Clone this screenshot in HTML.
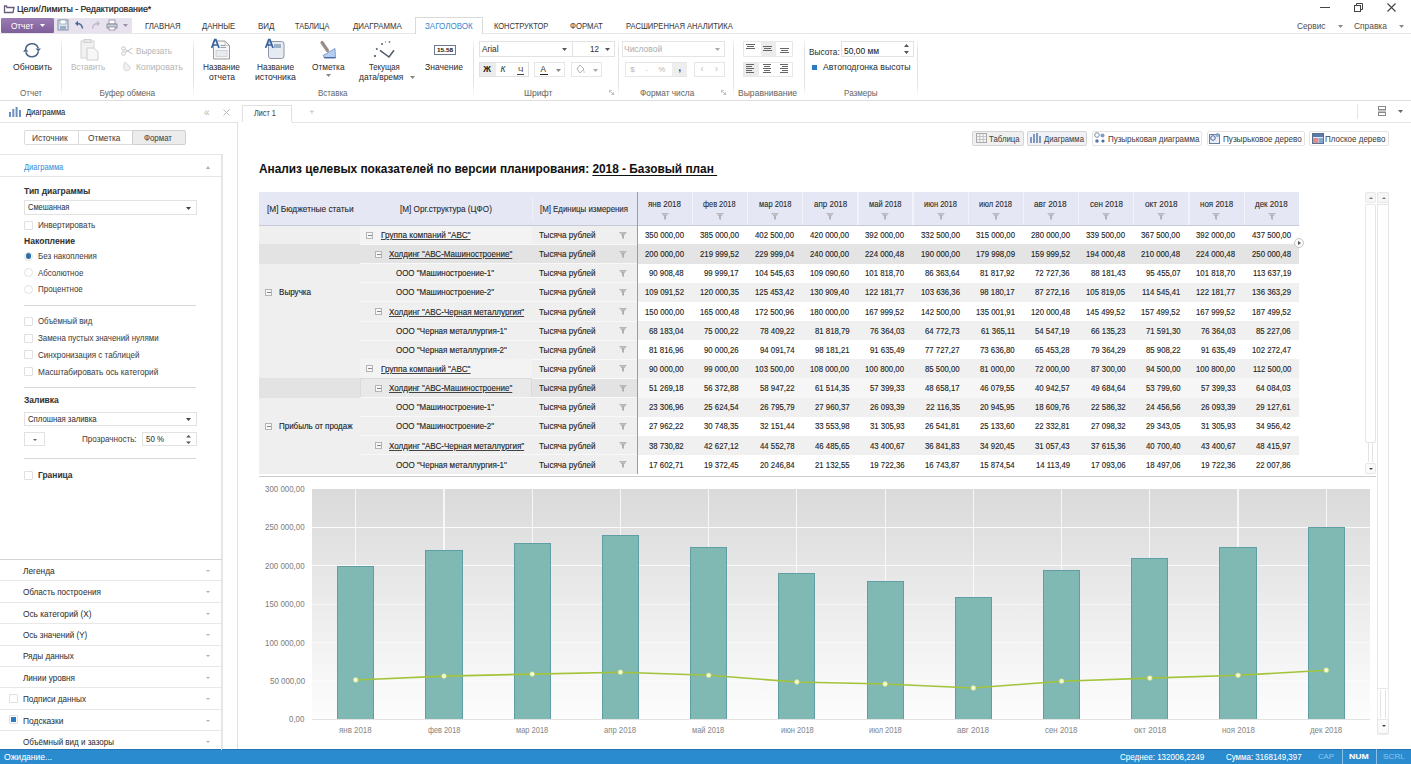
<!DOCTYPE html><html><head><meta charset="utf-8"><style>
*{margin:0;padding:0;box-sizing:border-box}
html,body{width:1411px;height:764px;overflow:hidden;background:#fff;font-family:"Liberation Sans",sans-serif}
.t{position:absolute;white-space:nowrap;line-height:1;transform-origin:0 0;-webkit-text-stroke:0.05px currentColor}
.r{position:absolute}
svg{position:absolute;overflow:visible}
</style></head><body>
<svg style="left:3px;top:3px" width="12" height="11" viewBox="0 0 12 11"><path d="M1.5 3.5 L1.5 9.5 L10 9.5 L11 4.5 L4 4.5 L3.5 3 L1.5 3 Z" fill="none" stroke="#6a5a7a" stroke-width="1.3"/></svg>
<div class="t" style="left:17.00px;top:5px;font-size:8.6px;color:#1a1a1a;transform:scaleX(1.0267);-webkit-text-stroke:0.2px currentColor;">Цели/Лимиты - Редактирование*</div>
<div class="r" style="left:1320px;top:7px;width:10px;height:1px;background:#444;"></div>
<svg style="left:1354px;top:3px" width="9" height="9" viewBox="0 0 9 9"><rect x="0.5" y="2.5" width="6" height="6" fill="none" stroke="#444"/><path d="M2.5 2.5 V0.5 H8.5 V6.5 H6.5" fill="none" stroke="#444"/></svg>
<svg style="left:1387px;top:3px" width="9" height="9" viewBox="0 0 9 9"><path d="M0.5 0.5 L8.5 8.5 M8.5 0.5 L0.5 8.5" stroke="#444" stroke-width="1.1"/></svg>
<div class="r" style="left:1px;top:18px;width:53px;height:15px;background:linear-gradient(#9a7bb3,#7e5f9a);border-radius:1px;"></div>
<div class="t" style="left:11.00px;top:23px;font-size:8.2px;color:#fff;">Отчет</div>
<svg style="left:40px;top:24px" width="5" height="3"><path d="M0 0 H5 L2.5 3Z" fill="#fff"/></svg>
<div class="r" style="left:54px;top:18px;width:78px;height:15px;background:#e8e2ef;"></div>
<svg style="left:57px;top:19px" width="12" height="12" viewBox="0 0 12 12"><rect x="1" y="1" width="10" height="10" fill="#dfe6f0" stroke="#7d8fa8"/><rect x="3" y="1" width="6" height="4" fill="#fff" stroke="#7d8fa8" stroke-width=".6"/><rect x="3" y="7" width="6" height="4" fill="#9bb0c8"/></svg>
<svg style="left:74px;top:20px" width="10" height="10" viewBox="0 0 10 10"><path d="M8.5 8.5 Q8 3.5 3 3.5" fill="none" stroke="#4a6a95" stroke-width="1.5"/><path d="M1 3.5 L4 0.8 L4 6.2Z" fill="#4a6a95"/></svg>
<svg style="left:91px;top:20px" width="10" height="10" viewBox="0 0 10 10"><path d="M1.5 8.5 Q2 3.5 7 3.5" fill="none" stroke="#c0b8c8" stroke-width="1.5"/><path d="M9 3.5 L6 0.8 L6 6.2Z" fill="#c0b8c8"/></svg>
<svg style="left:106px;top:19px" width="12" height="12" viewBox="0 0 12 12"><rect x="3" y="1" width="6" height="4" fill="#fff" stroke="#8a8a9a" stroke-width=".8"/><rect x="1" y="5" width="10" height="4" fill="#c8ccd8" stroke="#7a7f90" stroke-width=".8"/><rect x="3" y="8" width="6" height="3" fill="#fff" stroke="#8a8a9a" stroke-width=".8"/></svg>
<svg style="left:123px;top:24px" width="5" height="3"><path d="M0 0 H5 L2.5 3Z" fill="#9a92a8"/></svg>
<div class="r" style="left:0px;top:32.5px;width:1411px;height:1.8px;background:#e8e8e8;"></div>
<div class="r" style="left:415px;top:17px;width:68px;height:17px;background:#fff;border:1px solid #dadada;border-bottom:none;"></div>
<div class="t" style="left:145.00px;top:23px;font-size:8.2px;color:#3a3a3a;transform:scaleX(0.9459);">ГЛАВНАЯ</div>
<div class="t" style="left:202.00px;top:23px;font-size:8.2px;color:#3a3a3a;transform:scaleX(0.9306);">ДАННЫЕ</div>
<div class="t" style="left:257.50px;top:23px;font-size:8.2px;color:#3a3a3a;transform:scaleX(0.9706);">ВИД</div>
<div class="t" style="left:295.30px;top:23px;font-size:8.2px;color:#3a3a3a;transform:scaleX(0.8974);">ТАБЛИЦА</div>
<div class="t" style="left:353.00px;top:23px;font-size:8.2px;color:#3a3a3a;transform:scaleX(0.9608);">ДИАГРАММА</div>
<div class="t" style="left:424.70px;top:23px;font-size:8.2px;color:#3d8fd8;transform:scaleX(0.9796);">ЗАГОЛОВОК</div>
<div class="t" style="left:494.40px;top:23px;font-size:8.2px;color:#3a3a3a;transform:scaleX(0.9153);">КОНСТРУКТОР</div>
<div class="t" style="left:569.60px;top:23px;font-size:8.2px;color:#3a3a3a;transform:scaleX(0.9486);">ФОРМАТ</div>
<div class="t" style="left:626.30px;top:23px;font-size:8.2px;color:#3a3a3a;transform:scaleX(0.9259);">РАСШИРЕННАЯ АНАЛИТИКА</div>
<div class="t" style="left:1297.30px;top:23px;font-size:8.2px;color:#555;transform:scaleX(1.0143);">Сервис</div>
<div class="t" style="left:1354.00px;top:23px;font-size:8.2px;color:#555;transform:scaleX(1.0219);">Справка</div>
<svg style="left:1338px;top:25px" width="5" height="3"><path d="M0 0 H5 L2.5 3Z" fill="#888"/></svg>
<svg style="left:1399px;top:25px" width="5" height="3"><path d="M0 0 H5 L2.5 3Z" fill="#888"/></svg>
<div class="r" style="left:0px;top:100px;width:1411px;height:1px;background:#dedede;"></div>
<div class="r" style="left:60.5px;top:38px;width:1px;height:58px;background:linear-gradient(rgba(230,230,230,0),#e2e2e2 20%,#e2e2e2 80%,rgba(230,230,230,0));"></div>
<div class="r" style="left:193px;top:38px;width:1px;height:58px;background:linear-gradient(rgba(230,230,230,0),#e2e2e2 20%,#e2e2e2 80%,rgba(230,230,230,0));"></div>
<div class="r" style="left:473px;top:38px;width:1px;height:58px;background:linear-gradient(rgba(230,230,230,0),#e2e2e2 20%,#e2e2e2 80%,rgba(230,230,230,0));"></div>
<div class="r" style="left:618px;top:38px;width:1px;height:58px;background:linear-gradient(rgba(230,230,230,0),#e2e2e2 20%,#e2e2e2 80%,rgba(230,230,230,0));"></div>
<div class="r" style="left:733px;top:38px;width:1px;height:58px;background:linear-gradient(rgba(230,230,230,0),#e2e2e2 20%,#e2e2e2 80%,rgba(230,230,230,0));"></div>
<div class="r" style="left:803.7px;top:38px;width:1px;height:58px;background:linear-gradient(rgba(230,230,230,0),#e2e2e2 20%,#e2e2e2 80%,rgba(230,230,230,0));"></div>
<div class="r" style="left:916.6px;top:38px;width:1px;height:58px;background:linear-gradient(rgba(230,230,230,0),#e2e2e2 20%,#e2e2e2 80%,rgba(230,230,230,0));"></div>
<div class="t" style="left:20.40px;top:90px;font-size:8.2px;color:#6a6a6a;transform:scaleX(0.9826);">Отчет</div>
<div class="t" style="left:99.50px;top:90px;font-size:8.2px;color:#6a6a6a;">Буфер обмена</div>
<div class="t" style="left:318.00px;top:90px;font-size:8.2px;color:#6a6a6a;transform:scaleX(0.9677);">Вставка</div>
<div class="t" style="left:524.40px;top:90px;font-size:8.2px;color:#6a6a6a;transform:scaleX(1.0593);">Шрифт</div>
<div class="t" style="left:640.00px;top:90px;font-size:8.2px;color:#6a6a6a;transform:scaleX(1.0130);">Формат числа</div>
<div class="t" style="left:737.50px;top:90px;font-size:8.2px;color:#6a6a6a;transform:scaleX(1.0464);">Выравнивание</div>
<div class="t" style="left:844.00px;top:90px;font-size:8.2px;color:#6a6a6a;transform:scaleX(0.9882);">Размеры</div>
<svg style="left:608.5px;top:90px" width="5" height="5" viewBox="0 0 5 5"><path d="M0.5 0.5 H2.5 M0.5 0.5 V2.5 M1.5 1.5 L4.5 4.5 M4.5 2.5 V4.5 H2.5" stroke="#aaa" stroke-width=".8" fill="none"/></svg>
<svg style="left:720.5px;top:90px" width="5" height="5" viewBox="0 0 5 5"><path d="M0.5 0.5 H2.5 M0.5 0.5 V2.5 M1.5 1.5 L4.5 4.5 M4.5 2.5 V4.5 H2.5" stroke="#aaa" stroke-width=".8" fill="none"/></svg>
<svg style="left:23.3px;top:40.7px" width="18" height="18" viewBox="0 0 18 18"><path d="M2.6 8.2 A6.5 6.5 0 0 1 15.2 7.2" fill="none" stroke="#4d6585" stroke-width="1.6"/><path d="M15.4 10.4 A6.5 6.5 0 0 1 2.8 11.2" fill="none" stroke="#4d6585" stroke-width="1.6"/><path d="M12.6 7.4 H18 L15.3 10.6Z" fill="#4d6585"/><path d="M0 10.8 H5.4 L2.7 7.6Z" fill="#4d6585"/></svg>
<div class="t" style="left:12.80px;top:64px;font-size:8.2px;color:#333;transform:scaleX(1.0541);">Обновить</div>
<svg style="left:80px;top:39px" width="19" height="22" viewBox="0 0 19 22"><rect x="1" y="2" width="13" height="17" fill="#f1f1f1" stroke="#d4d4d4"/><rect x="4" y="0.5" width="7" height="3" fill="#e8e8e8" stroke="#d0d0d0"/><path d="M7 9 H14 L18 13 V21 H7Z" fill="#f7f7f7" stroke="#cfcfcf"/></svg>
<div class="t" style="left:71.40px;top:64px;font-size:8.2px;color:#b8b8b8;transform:scaleX(0.9829);">Вставить</div>
<svg style="left:121px;top:46px" width="12" height="10" viewBox="0 0 12 10"><circle cx="2.5" cy="2.5" r="1.8" fill="none" stroke="#c4c4c4"/><circle cx="2.5" cy="7.5" r="1.8" fill="none" stroke="#c4c4c4"/><path d="M4 3.5 L11.5 8 M4 6.5 L11.5 2" stroke="#c4c4c4"/></svg>
<div class="t" style="left:136.00px;top:48px;font-size:8.2px;color:#b8b8b8;transform:scaleX(0.9892);">Вырезать</div>
<svg style="left:122px;top:61px" width="10" height="11" viewBox="0 0 10 11"><path d="M2 5 Q1 1 4 1.5 L6 4 Q9 5 8 8 Q6 10.5 3 9.5 Q1 8 2 5Z" fill="#f0f0f0" stroke="#d8d8d8"/></svg>
<div class="t" style="left:136.00px;top:64px;font-size:8.2px;color:#b8b8b8;transform:scaleX(1.0636);">Копировать</div>
<svg style="left:211px;top:39px" width="21" height="21" viewBox="0 0 21 21"><path d="M2.5 2 H14 L18.5 6.5 V20 H2.5Z" fill="#f6f6f6" stroke="#9a9a9a"/><path d="M14 2 V6.5 H18.5" fill="none" stroke="#b0b0b0" stroke-width=".7"/><rect x="5" y="11.5" width="11" height="6" fill="#e8ebef" stroke="#c4c8cf" stroke-width=".7"/><path d="M9.5 6.5 H14 M9.5 8.5 H15" stroke="#7a8aa0" stroke-width=".8"/><path d="M0.6 9 L3.7 0.6 H4.9 L8 9 M1.8 6 H6.8" stroke="#3a64a0" stroke-width="1.7" fill="none"/></svg>
<div class="t" style="left:202.60px;top:64px;font-size:8.2px;color:#333;transform:scaleX(1.0081);">Название</div>
<div class="t" style="left:208.90px;top:74px;font-size:8.2px;color:#333;transform:scaleX(1.0440);">отчета</div>
<svg style="left:265px;top:39px" width="21" height="21" viewBox="0 0 21 21"><rect x="3.5" y="2.5" width="15.5" height="17" rx="2.5" fill="#e6ebf3" stroke="#8c96a6"/><rect x="9" y="5" width="7" height="4" fill="#9fb0c8"/><path d="M0.6 9 L3.7 0.6 H4.9 L8 9 M1.8 6 H6.8" stroke="#3a64a0" stroke-width="1.7" fill="none"/></svg>
<div class="t" style="left:257.00px;top:64px;font-size:8.2px;color:#333;transform:scaleX(1.0108);">Название</div>
<div class="t" style="left:255.20px;top:74px;font-size:8.2px;color:#333;transform:scaleX(1.0641);">источника</div>
<svg style="left:315px;top:36px" width="30" height="26" viewBox="315 36 30 26"><path d="M322 42.5 L327.5 50.5" stroke="#9c8c88" stroke-width="3.2" stroke-linecap="round"/><path d="M323 55.5 L335 48.5 L335.5 58 L324.5 58Z" fill="#b4cdf0" stroke="#6d8fc4" stroke-width=".8"/><path d="M324 57.6 H335.5" stroke="#4a6a9e" stroke-width="1.2"/></svg>
<div class="t" style="left:311.60px;top:64px;font-size:8.2px;color:#333;transform:scaleX(1.0125);">Отметка</div>
<svg style="left:326px;top:74px" width="5" height="3"><path d="M0 0 H5 L2.5 3Z" fill="#888"/></svg>
<svg style="left:370px;top:36px" width="30" height="26" viewBox="370 36 30 26"><circle cx="375" cy="56" r="1.1" fill="#4a5260"/><circle cx="376.8" cy="49" r="1" fill="#5a626e"/><circle cx="382" cy="44" r="1" fill="#5a626e"/><circle cx="385.5" cy="42" r=".8" fill="#9aa0a8"/><circle cx="389.5" cy="42" r=".9" fill="#7a808a"/><path d="M380 50.3 L389 57 L394 50.3" fill="none" stroke="#505a68" stroke-width="1.5"/></svg>
<div class="t" style="left:369.00px;top:64px;font-size:8.2px;color:#333;transform:scaleX(0.9455);">Текущая</div>
<div class="t" style="left:359.10px;top:74px;font-size:8.2px;color:#333;transform:scaleX(1.0279);">дата/время</div>
<svg style="left:410px;top:76px" width="5" height="3"><path d="M0 0 H5 L2.5 3Z" fill="#888"/></svg>
<div class="r" style="left:433.5px;top:44.8px;width:22px;height:10.2px;border:1px solid #6a7a90;background:#fff;"></div>
<div class="t" style="left:436.50px;top:47px;font-size:6px;color:#222;font-weight:bold;transform:scaleX(1.0667);">15.58</div>
<div class="t" style="left:425.40px;top:64px;font-size:8.2px;color:#333;transform:scaleX(1.0444);">Значение</div>
<div class="r" style="left:478.5px;top:41.3px;width:136px;height:15.3px;border:1px solid #e2e2e2;background:#fff;"></div>
<div class="r" style="left:572.2px;top:41.3px;width:1px;height:15.3px;background:#e2e2e2;"></div>
<div class="t" style="left:481.50px;top:46px;font-size:8.2px;color:#333;transform:scaleX(1.0063);">Arial</div>
<div class="t" style="left:590.20px;top:46px;font-size:8.2px;color:#333;transform:scaleX(0.9778);">12</div>
<svg style="left:561.5px;top:48px" width="5" height="3"><path d="M0 0 H5 L2.5 3Z" fill="#555"/></svg>
<svg style="left:604.5px;top:48px" width="5" height="3"><path d="M0 0 H5 L2.5 3Z" fill="#555"/></svg>
<div class="r" style="left:478.5px;top:62px;width:50.5px;height:14.5px;border:1px solid #e0e0e0;background:#fff;"></div>
<div class="r" style="left:479.5px;top:63px;width:16px;height:12.5px;background:#ececec;"></div>
<div class="t" style="left:483.30px;top:65px;font-size:8.5px;color:#222;font-weight:bold;">Ж</div>
<div class="t" style="left:500.50px;top:65px;font-size:8.5px;color:#333;font-style:italic;">К</div>
<div class="t" style="left:518.00px;top:66px;font-size:8px;color:#444;">Ч</div>
<div class="r" style="left:517px;top:74px;width:7px;height:0.8px;background:#444;"></div>
<div class="r" style="left:534px;top:62px;width:31.3px;height:14.5px;border:1px solid #e6e6e6;background:#fff;"></div>
<div class="t" style="left:540.50px;top:66px;font-size:8.2px;color:#333;">А</div>
<div class="r" style="left:539.5px;top:73.5px;width:8px;height:1.5px;background:#222;"></div>
<svg style="left:555.5px;top:69px" width="5" height="3"><path d="M0 0 H5 L2.5 3Z" fill="#888"/></svg>
<div class="r" style="left:571px;top:62px;width:30.7px;height:14.5px;border:1px solid #e6e6e6;background:#fff;"></div>
<svg style="left:575px;top:64px" width="11" height="10" viewBox="0 0 11 10"><path d="M2 5 L5 1 L9 5 L5 9Z" fill="none" stroke="#b0b0b0"/><path d="M8 6 Q10 8 9 9" stroke="#c8c8c8" fill="none"/></svg>
<svg style="left:592.5px;top:69px" width="5" height="3"><path d="M0 0 H5 L2.5 3Z" fill="#aaa"/></svg>
<div class="r" style="left:622px;top:41.3px;width:102.5px;height:15.3px;border:1px solid #e4e4e4;background:#fff;"></div>
<div class="t" style="left:623.90px;top:46px;font-size:8.2px;color:#b0b0b0;transform:scaleX(1.0324);">Числовой</div>
<svg style="left:714.5px;top:48px" width="5" height="3"><path d="M0 0 H5 L2.5 3Z" fill="#aaa"/></svg>
<div class="r" style="left:625px;top:62px;width:62px;height:14.5px;border:1px solid #e6e6e6;background:#fff;"></div>
<div class="r" style="left:671.5px;top:63px;width:15px;height:12.5px;background:#eeeeee;"></div>
<div class="t" style="left:630.20px;top:66px;font-size:8px;color:#bbb;">$</div>
<div class="t" style="left:645.30px;top:66px;font-size:8px;color:#ccc;">-</div>
<div class="t" style="left:658.50px;top:66px;font-size:7.5px;color:#bbb;">%</div>
<div class="t" style="left:678.40px;top:64px;font-size:9px;color:#333;font-weight:bold;">,</div>
<div class="r" style="left:693.5px;top:62px;width:31.8px;height:14.5px;border:1px solid #e6e6e6;background:#fff;"></div>
<div class="t" style="left:700.50px;top:65px;font-size:9px;color:#bbb;">‹</div>
<div class="t" style="left:715.00px;top:65px;font-size:9px;color:#bbb;">›</div>
<div class="r" style="left:743.3px;top:41.3px;width:49.7px;height:15.3px;border:1px solid #e8e8e8;"></div>
<div class="r" style="left:760.5px;top:42.3px;width:15px;height:13.3px;background:#ececec;"></div>
<div class="r" style="left:743.3px;top:62px;width:49.7px;height:14.5px;border:1px solid #e8e8e8;"></div>
<div class="r" style="left:744.3px;top:63px;width:15px;height:12.5px;background:#ececec;"></div>
<div class="r" style="left:746px;top:44px;width:9px;height:1.4px;background:#666"></div><div class="r" style="left:747px;top:46px;width:7px;height:1.4px;background:#666"></div><div class="r" style="left:746px;top:48px;width:9px;height:1.4px;background:#666"></div>
<div class="r" style="left:763px;top:46px;width:9px;height:1.4px;background:#666"></div><div class="r" style="left:764px;top:48px;width:7px;height:1.4px;background:#666"></div><div class="r" style="left:763px;top:50px;width:9px;height:1.4px;background:#666"></div>
<div class="r" style="left:780px;top:48px;width:9px;height:1.4px;background:#666"></div><div class="r" style="left:781px;top:50px;width:7px;height:1.4px;background:#666"></div><div class="r" style="left:780px;top:52px;width:9px;height:1.4px;background:#666"></div>
<div class="r" style="left:746px;top:64px;width:8px;height:1.4px;background:#666"></div><div class="r" style="left:746px;top:66px;width:6px;height:1.4px;background:#666"></div><div class="r" style="left:746px;top:68px;width:8px;height:1.4px;background:#666"></div><div class="r" style="left:746px;top:70px;width:6px;height:1.4px;background:#666"></div><div class="r" style="left:746px;top:72px;width:8px;height:1.4px;background:#666"></div>
<div class="r" style="left:763px;top:64px;width:8px;height:1.4px;background:#666"></div><div class="r" style="left:764px;top:66px;width:6px;height:1.4px;background:#666"></div><div class="r" style="left:763px;top:68px;width:8px;height:1.4px;background:#666"></div><div class="r" style="left:764px;top:70px;width:6px;height:1.4px;background:#666"></div><div class="r" style="left:763px;top:72px;width:8px;height:1.4px;background:#666"></div>
<div class="r" style="left:780px;top:64px;width:8px;height:1.4px;background:#666"></div><div class="r" style="left:782px;top:66px;width:6px;height:1.4px;background:#666"></div><div class="r" style="left:780px;top:68px;width:8px;height:1.4px;background:#666"></div><div class="r" style="left:782px;top:70px;width:6px;height:1.4px;background:#666"></div><div class="r" style="left:780px;top:72px;width:8px;height:1.4px;background:#666"></div>
<div class="t" style="left:808.70px;top:49px;font-size:8.2px;color:#333;transform:scaleX(1.0100);">Высота:</div>
<div class="r" style="left:841.3px;top:41.3px;width:72.3px;height:15.7px;border:1px solid #e2e2e2;background:#fff;"></div>
<div class="t" style="left:844.00px;top:48px;font-size:8.2px;color:#222;transform:scaleX(1.0294);">50,00 мм</div>
<svg style="left:903.5px;top:44px" width="5" height="10"><path d="M0 3 L2.5 0 L5 3Z M0 7 H5 L2.5 10Z" fill="#555"/></svg>
<div class="r" style="left:811.5px;top:64.5px;width:5.5px;height:5.5px;background:#2b7bc4;"></div>
<div class="t" style="left:822.90px;top:64px;font-size:8.2px;color:#333;transform:scaleX(1.0634);">Автоподгонка высоты</div>
<div class="r" style="left:0px;top:122px;width:238px;height:1px;background:#e4e4e4;"></div>
<div class="r" style="left:292px;top:122px;width:1119px;height:1px;background:#e4e4e4;"></div>
<div class="r" style="left:238px;top:121.5px;width:54px;height:1px;background:#fff;"></div>
<svg style="left:9px;top:107px" width="12" height="10" viewBox="0 0 12 10"><rect x="0" y="5" width="2" height="5" fill="#6d8fbf"/><rect x="3.3" y="2" width="2" height="8" fill="#6d8fbf"/><rect x="6.6" y="0" width="2" height="10" fill="#6d8fbf"/><rect x="10" y="3" width="2" height="7" fill="#6d8fbf"/></svg>
<div class="t" style="left:25.60px;top:109px;font-size:8.2px;color:#222;transform:scaleX(0.9233);">Диаграмма</div>
<div class="t" style="left:204.00px;top:108px;font-size:10px;color:#bbb;">«</div>
<svg style="left:222.5px;top:108.5px" width="7" height="7"><path d="M0.5 0.5 L6.5 6.5 M6.5 0.5 L0.5 6.5" stroke="#bbb" stroke-width="1"/></svg>
<div class="r" style="left:241.5px;top:105.4px;width:50px;height:17px;border:1px solid #e0e0e0;border-bottom:none;background:#fff;"></div>
<div class="t" style="left:254.40px;top:110px;font-size:8.2px;color:#444;transform:scaleX(0.8880);">Лист 1</div>
<div class="t" style="left:309.30px;top:108px;font-size:9px;color:#bbb;">+</div>
<div class="r" style="left:1356.5px;top:104px;width:1px;height:15px;background:#e4e4e4;"></div>
<svg style="left:1378px;top:106px" width="8" height="10" viewBox="0 0 8 10"><rect x=".5" y=".5" width="7" height="3" fill="none" stroke="#888"/><rect x=".5" y="6.5" width="7" height="3" fill="none" stroke="#888"/><path d="M0 5 H8" stroke="#888"/></svg>
<svg style="left:1397.5px;top:110px" width="5" height="3"><path d="M0 0 H5 L2.5 3Z" fill="#666"/></svg>
<div class="r" style="left:0px;top:749px;width:1411px;height:15px;background:#2a8ccf;border-top:1px solid #2274b4;"></div>
<div class="t" style="left:4.00px;top:754px;font-size:8.2px;color:#fff;transform:scaleX(1.0435);">Ожидание...</div>
<div class="r" style="left:237px;top:123px;width:1px;height:626px;background:#e2e2e2;"></div>
<div class="r" style="left:24px;top:130.4px;width:162.4px;height:14.7px;border:1px solid #dcdcdc;border-radius:2px;background:#fff;"></div>
<div class="r" style="left:132px;top:130.4px;width:54.4px;height:14.7px;border:1px solid #cfcfcf;border-radius:2px;background:#ececec;"></div>
<div class="r" style="left:77.8px;top:131px;width:1px;height:13.5px;background:#dcdcdc;"></div>
<div class="t" style="left:32.40px;top:135px;font-size:8.2px;color:#444;transform:scaleX(1.0171);">Источник</div>
<div class="t" style="left:88.40px;top:135px;font-size:8.2px;color:#444;transform:scaleX(1.0063);">Отметка</div>
<div class="t" style="left:144.40px;top:135px;font-size:8.2px;color:#444;transform:scaleX(0.9621);">Формат</div>
<div class="r" style="left:-1px;top:154.2px;width:223.2px;height:596px;border:1px solid #e6e6e6;border-bottom:none;"></div>
<div class="r" style="left:0px;top:176px;width:222px;height:1px;background:#e6e6e6;"></div>
<div class="t" style="left:23.80px;top:164px;font-size:8.2px;color:#3d8fd8;transform:scaleX(0.9233);">Диаграмма</div>
<svg style="left:205.5px;top:165.5px" width="4" height="3"><path d="M0 3 L2 0 L4 3Z" fill="#aaa"/></svg>
<div class="t" style="left:23.60px;top:188px;font-size:8.2px;color:#333;font-weight:bold;transform:scaleX(1.0406);">Тип диаграммы</div>
<div class="r" style="left:23.6px;top:200.3px;width:173.2px;height:15px;border:1px solid #e2e2e2;background:#fff;"></div>
<div class="t" style="left:28.00px;top:204px;font-size:8.2px;color:#333;transform:scaleX(0.9156);">Смешанная</div>
<svg style="left:186px;top:206.5px" width="5" height="3"><path d="M0 0 H5 L2.5 3Z" fill="#444"/></svg>
<div class="r" style="left:24px;top:220.9px;width:9px;height:9px;border:1px solid #e0e0e0;background:#fff;border-radius:1px"></div>
<div class="t" style="left:38.00px;top:222px;font-size:8.2px;color:#444;transform:scaleX(0.9948);">Инвертировать</div>
<div class="t" style="left:23.60px;top:238px;font-size:8.2px;color:#333;font-weight:bold;transform:scaleX(1.0490);">Накопление</div>
<div class="r" style="left:24px;top:251.5px;width:9px;height:9px;border:1px solid #e2e2e2;border-radius:50%;background:#fff"></div>
<div class="r" style="left:25.7px;top:253.2px;width:5.6px;height:5.6px;border-radius:50%;background:#2f6ea8"></div>
<div class="t" style="left:38.00px;top:253px;font-size:8.2px;color:#444;transform:scaleX(0.9750);">Без накопления</div>
<div class="r" style="left:24px;top:268.4px;width:9px;height:9px;border:1px solid #e2e2e2;border-radius:50%;background:#fff"></div>
<div class="t" style="left:38.00px;top:270px;font-size:8.2px;color:#444;transform:scaleX(0.9702);">Абсолютное</div>
<div class="r" style="left:24px;top:284.8px;width:9px;height:9px;border:1px solid #e2e2e2;border-radius:50%;background:#fff"></div>
<div class="t" style="left:38.00px;top:286px;font-size:8.2px;color:#444;transform:scaleX(0.9717);">Процентное</div>
<div class="r" style="left:24px;top:305px;width:172px;height:1px;background:#d8d8d8;"></div>
<div class="r" style="left:24px;top:316.5px;width:9px;height:9px;border:1px solid #e0e0e0;background:#fff;border-radius:1px"></div>
<div class="t" style="left:38.00px;top:318px;font-size:8.2px;color:#444;transform:scaleX(0.9509);">Объёмный вид</div>
<div class="r" style="left:24px;top:333.5px;width:9px;height:9px;border:1px solid #e0e0e0;background:#fff;border-radius:1px"></div>
<div class="t" style="left:38.00px;top:335px;font-size:8.2px;color:#444;transform:scaleX(0.9664);">Замена пустых значений нулями</div>
<div class="r" style="left:24px;top:350.3px;width:9px;height:9px;border:1px solid #e0e0e0;background:#fff;border-radius:1px"></div>
<div class="t" style="left:38.00px;top:352px;font-size:8.2px;color:#444;transform:scaleX(0.9796);">Синхронизация с таблицей</div>
<div class="r" style="left:24px;top:367.3px;width:9px;height:9px;border:1px solid #e0e0e0;background:#fff;border-radius:1px"></div>
<div class="t" style="left:38.00px;top:369px;font-size:8.2px;color:#444;">Масштабировать ось категорий</div>
<div class="r" style="left:24px;top:387px;width:172px;height:1px;background:#d8d8d8;"></div>
<div class="t" style="left:23.60px;top:397px;font-size:8.2px;color:#333;font-weight:bold;transform:scaleX(1.0353);">Заливка</div>
<div class="r" style="left:23.6px;top:412.4px;width:173.2px;height:14px;border:1px solid #e2e2e2;background:#fff;"></div>
<div class="t" style="left:28.00px;top:416px;font-size:8.2px;color:#333;transform:scaleX(0.9466);">Сплошная заливка</div>
<svg style="left:186px;top:418px" width="5" height="3"><path d="M0 0 H5 L2.5 3Z" fill="#444"/></svg>
<div class="r" style="left:24px;top:432px;width:21.2px;height:14.4px;border:1px solid #e2e2e2;background:#fff;"></div>
<svg style="left:32.5px;top:438.5px" width="4" height="2"><path d="M0 0 H4 L2 2Z" fill="#666"/></svg>
<div class="t" style="left:82.00px;top:436px;font-size:8.2px;color:#444;transform:scaleX(0.9873);">Прозрачность:</div>
<div class="r" style="left:142px;top:432px;width:54.8px;height:14.4px;border:1px solid #e2e2e2;background:#fff;"></div>
<div class="t" style="left:146.40px;top:436px;font-size:8.2px;color:#333;transform:scaleX(0.9684);">50 %</div>
<svg style="left:186px;top:434.5px" width="5" height="9"><path d="M0 2.5 L2.5 0 L5 2.5Z M0 6.5 H5 L2.5 9Z" fill="#555"/></svg>
<div class="r" style="left:24px;top:458px;width:172px;height:1px;background:#d8d8d8;"></div>
<div class="r" style="left:24px;top:470.5px;width:9px;height:9px;border:1px solid #e0e0e0;background:#fff;border-radius:1px"></div>
<div class="t" style="left:38.00px;top:472px;font-size:8.2px;color:#333;font-weight:bold;transform:scaleX(1.0294);">Граница</div>
<div class="r" style="left:0px;top:559px;width:222px;height:1px;background:#d4d4d4;"></div>
<div class="t" style="left:22.90px;top:568px;font-size:8.2px;color:#333;transform:scaleX(1.0194);">Легенда</div>
<svg style="left:205.5px;top:569.8px" width="4" height="2"><path d="M0 0 H4 L2 2Z" fill="#b0b0b0"/></svg>
<div class="r" style="left:0px;top:580.4px;width:222px;height:1px;background:#e8e8e8;"></div>
<div class="t" style="left:22.90px;top:589px;font-size:8.2px;color:#333;transform:scaleX(0.9923);">Область построения</div>
<svg style="left:205.5px;top:591.1899999999999px" width="4" height="2"><path d="M0 0 H4 L2 2Z" fill="#b0b0b0"/></svg>
<div class="r" style="left:0px;top:601.79px;width:222px;height:1px;background:#e8e8e8;"></div>
<div class="t" style="left:22.90px;top:611px;font-size:8.2px;color:#333;transform:scaleX(1.0149);">Ось категорий (X)</div>
<svg style="left:205.5px;top:612.5799999999999px" width="4" height="2"><path d="M0 0 H4 L2 2Z" fill="#b0b0b0"/></svg>
<div class="r" style="left:0px;top:623.18px;width:222px;height:1px;background:#e8e8e8;"></div>
<div class="t" style="left:22.90px;top:632px;font-size:8.2px;color:#333;transform:scaleX(0.9831);">Ось значений (Y)</div>
<svg style="left:205.5px;top:633.9699999999999px" width="4" height="2"><path d="M0 0 H4 L2 2Z" fill="#b0b0b0"/></svg>
<div class="r" style="left:0px;top:644.5699999999999px;width:222px;height:1px;background:#e8e8e8;"></div>
<div class="t" style="left:22.90px;top:653px;font-size:8.2px;color:#333;">Ряды данных</div>
<svg style="left:205.5px;top:655.3599999999999px" width="4" height="2"><path d="M0 0 H4 L2 2Z" fill="#b0b0b0"/></svg>
<div class="r" style="left:0px;top:665.96px;width:222px;height:1px;background:#e8e8e8;"></div>
<div class="t" style="left:22.90px;top:675px;font-size:8.2px;color:#333;transform:scaleX(0.9923);">Линии уровня</div>
<svg style="left:205.5px;top:676.75px" width="4" height="2"><path d="M0 0 H4 L2 2Z" fill="#b0b0b0"/></svg>
<div class="r" style="left:0px;top:687.35px;width:222px;height:1px;background:#e8e8e8;"></div>
<div class="t" style="left:22.90px;top:696px;font-size:8.2px;color:#333;transform:scaleX(0.9952);">Подписи данных</div>
<svg style="left:205.5px;top:698.14px" width="4" height="2"><path d="M0 0 H4 L2 2Z" fill="#b0b0b0"/></svg>
<div class="r" style="left:0px;top:708.74px;width:222px;height:1px;background:#e8e8e8;"></div>
<div class="t" style="left:22.90px;top:718px;font-size:8.2px;color:#333;transform:scaleX(1.0282);">Подсказки</div>
<svg style="left:205.5px;top:719.53px" width="4" height="2"><path d="M0 0 H4 L2 2Z" fill="#b0b0b0"/></svg>
<div class="r" style="left:0px;top:730.13px;width:222px;height:1px;background:#e8e8e8;"></div>
<div class="t" style="left:22.90px;top:739px;font-size:8.2px;color:#333;transform:scaleX(0.9774);">Объёмный вид и зазоры</div>
<svg style="left:205.5px;top:740.92px" width="4" height="2"><path d="M0 0 H4 L2 2Z" fill="#b0b0b0"/></svg>
<div class="r" style="left:8.5px;top:693.9px;width:9px;height:9px;border:1px solid #e0e0e0;background:#fff;border-radius:1px"></div>
<div class="r" style="left:8.5px;top:715.0px;width:9px;height:9px;border:1px solid #e0e0e0;background:#fff;border-radius:1px"></div>
<div class="r" style="left:10.5px;top:717.0px;width:5px;height:5px;background:#2b7bc4"></div>
<div class="r" style="left:222px;top:154.2px;width:1px;height:595px;background:#e6e6e6;"></div>
<div class="r" style="left:972.1px;top:131.2px;width:51.799999999999955px;height:14.4px;border:1px solid #d4d4d4;border-radius:2px;background:#f0f0f0;"></div>
<div class="r" style="left:1027px;top:131.2px;width:60.200000000000045px;height:14.4px;border:1px solid #d4d4d4;border-radius:2px;background:#f0f2f7;"></div>
<div class="r" style="left:1091.6px;top:131.2px;width:110.60000000000014px;height:14.4px;border:1px solid #e4e4e4;border-radius:2px;background:#fff;"></div>
<div class="r" style="left:1206.6px;top:131.2px;width:98.40000000000009px;height:14.4px;border:1px solid #e4e4e4;border-radius:2px;background:#fff;"></div>
<div class="r" style="left:1309.2px;top:131.2px;width:79.79999999999995px;height:14.4px;border:1px solid #e4e4e4;border-radius:2px;background:#fff;"></div>
<svg style="left:976px;top:133px" width="11" height="10" viewBox="0 0 11 10"><rect x=".5" y=".5" width="10" height="9" fill="#f4f4f4" stroke="#a8a8a8"/><path d="M.5 3.5 H10.5 M.5 6.5 H10.5 M3.8 .5 V9.5 M7.2 .5 V9.5" stroke="#b4b4b4" stroke-width=".7"/></svg>
<div class="t" style="left:989.40px;top:136px;font-size:8.2px;color:#444;transform:scaleX(0.9563);">Таблица</div>
<svg style="left:1030px;top:133px" width="11" height="10" viewBox="0 0 11 10"><rect x="0" y="4" width="2" height="6" fill="#7f98bd"/><rect x="3" y="1" width="2" height="9" fill="#7f98bd"/><rect x="6" y="0" width="2" height="10" fill="#7f98bd"/><rect x="9" y="3" width="2" height="7" fill="#7f98bd"/></svg>
<div class="t" style="left:1043.70px;top:136px;font-size:8.2px;color:#444;transform:scaleX(0.9372);">Диаграмма</div>
<svg style="left:1094px;top:132px" width="12" height="12" viewBox="0 0 12 12"><circle cx="3" cy="3" r="2.3" fill="none" stroke="#7a8aa0"/><circle cx="8.5" cy="3.5" r="2" fill="#7a9cc8"/><circle cx="3" cy="9" r="1.8" fill="#5a7aaa"/><circle cx="9" cy="9" r="1.6" fill="#4a6a9a"/></svg>
<div class="t" style="left:1107.60px;top:136px;font-size:8.2px;color:#444;transform:scaleX(0.9723);">Пузырьковая диаграмма</div>
<svg style="left:1209px;top:132px" width="12" height="12" viewBox="0 0 12 12"><rect x=".5" y="2.5" width="10" height="9" fill="#e8eef6" stroke="#6a7f9f"/><circle cx="4" cy="6" r="2.3" fill="none" stroke="#4a6a9a"/><circle cx="8.5" cy="3" r="2" fill="#8aa8cc"/></svg>
<div class="t" style="left:1222.60px;top:136px;font-size:8.2px;color:#444;transform:scaleX(0.9912);">Пузырьковое дерево</div>
<svg style="left:1311.5px;top:132.5px" width="12" height="11" viewBox="0 0 12 11"><rect x=".5" y=".5" width="11" height="10" fill="#dfe7f2" stroke="#5a6f90"/><rect x="1" y="1" width="10" height="3" fill="#5a7aaa"/><rect x="1" y="5" width="5" height="5" fill="#e38a8a"/><rect x="6.5" y="5" width="4.5" height="5" fill="#8aa8cc"/></svg>
<div class="t" style="left:1325.20px;top:136px;font-size:8.2px;color:#444;transform:scaleX(0.9790);">Плоское дерево</div>
<div class="t" style="left:259.40px;top:162px;font-size:13px;color:#111;font-weight:bold;transform:scaleX(0.9117);">Анализ целевых показателей по версии планирования: <span style="text-decoration:underline;text-underline-offset:1.5px;text-decoration-thickness:1.3px">2018 - Базовый план&nbsp;</span></div>
<div class="r" style="left:259.2px;top:192px;width:1040.0px;height:33.19999999999999px;background:#e6e7f4;"></div>
<div class="r" style="left:691.6833333333334px;top:192px;width:1.3px;height:33.19999999999999px;background:#f2f3f9;"></div>
<div class="r" style="left:746.8666666666667px;top:192px;width:1.3px;height:33.19999999999999px;background:#f2f3f9;"></div>
<div class="r" style="left:802.05px;top:192px;width:1.3px;height:33.19999999999999px;background:#f2f3f9;"></div>
<div class="r" style="left:857.2333333333333px;top:192px;width:1.3px;height:33.19999999999999px;background:#f2f3f9;"></div>
<div class="r" style="left:912.4166666666667px;top:192px;width:1.3px;height:33.19999999999999px;background:#f2f3f9;"></div>
<div class="r" style="left:967.6px;top:192px;width:1.3px;height:33.19999999999999px;background:#f2f3f9;"></div>
<div class="r" style="left:1022.7833333333333px;top:192px;width:1.3px;height:33.19999999999999px;background:#f2f3f9;"></div>
<div class="r" style="left:1077.9666666666667px;top:192px;width:1.3px;height:33.19999999999999px;background:#f2f3f9;"></div>
<div class="r" style="left:1133.15px;top:192px;width:1.3px;height:33.19999999999999px;background:#f2f3f9;"></div>
<div class="r" style="left:1188.3333333333335px;top:192px;width:1.3px;height:33.19999999999999px;background:#f2f3f9;"></div>
<div class="r" style="left:1243.5166666666667px;top:192px;width:1.3px;height:33.19999999999999px;background:#f2f3f9;"></div>
<div class="t" style="left:267.20px;top:205px;font-size:8.5px;color:#2a2a2a;transform:scaleX(0.9784);-webkit-text-stroke:0.1px currentColor;">[М] Бюджетные статьи</div>
<div class="t" style="left:400.10px;top:205px;font-size:8.5px;color:#2a2a2a;transform:scaleX(0.9594);-webkit-text-stroke:0.1px currentColor;">[М] Орг.структура (ЦФО)</div>
<div class="t" style="left:540.00px;top:205px;font-size:8.5px;color:#2a2a2a;transform:scaleX(0.9263);-webkit-text-stroke:0.1px currentColor;">[М] Единицы измерения</div>
<div class="t" style="left:648.14px;top:200px;font-size:8.5px;color:#2a2a2a;transform:scaleX(0.9400);-webkit-text-stroke:0.1px currentColor;">янв 2018</div>
<svg style="left:660.5916666666667px;top:212.5px" width="8" height="7" viewBox="0 0 8 7"><path d="M0 0 H8 L5 3.5 V7 L3 6 V3.5Z" fill="#b4b4bc"/><path d="M0.5 1.2 H7.5" stroke="#fff" stroke-width=".5" opacity=".6"/></svg>
<div class="t" style="left:703.32px;top:200px;font-size:8.5px;color:#2a2a2a;transform:scaleX(0.8658);-webkit-text-stroke:0.1px currentColor;">фев 2018</div>
<svg style="left:715.775px;top:212.5px" width="8" height="7" viewBox="0 0 8 7"><path d="M0 0 H8 L5 3.5 V7 L3 6 V3.5Z" fill="#b4b4bc"/><path d="M0.5 1.2 H7.5" stroke="#fff" stroke-width=".5" opacity=".6"/></svg>
<div class="t" style="left:758.51px;top:200px;font-size:8.5px;color:#2a2a2a;transform:scaleX(0.8892);-webkit-text-stroke:0.1px currentColor;">мар 2018</div>
<svg style="left:770.9583333333334px;top:212.5px" width="8" height="7" viewBox="0 0 8 7"><path d="M0 0 H8 L5 3.5 V7 L3 6 V3.5Z" fill="#b4b4bc"/><path d="M0.5 1.2 H7.5" stroke="#fff" stroke-width=".5" opacity=".6"/></svg>
<div class="t" style="left:813.69px;top:200px;font-size:8.5px;color:#2a2a2a;transform:scaleX(0.9400);-webkit-text-stroke:0.1px currentColor;">апр 2018</div>
<svg style="left:826.1416666666667px;top:212.5px" width="8" height="7" viewBox="0 0 8 7"><path d="M0 0 H8 L5 3.5 V7 L3 6 V3.5Z" fill="#b4b4bc"/><path d="M0.5 1.2 H7.5" stroke="#fff" stroke-width=".5" opacity=".6"/></svg>
<div class="t" style="left:868.88px;top:200px;font-size:8.5px;color:#2a2a2a;transform:scaleX(0.8892);-webkit-text-stroke:0.1px currentColor;">май 2018</div>
<svg style="left:881.325px;top:212.5px" width="8" height="7" viewBox="0 0 8 7"><path d="M0 0 H8 L5 3.5 V7 L3 6 V3.5Z" fill="#b4b4bc"/><path d="M0.5 1.2 H7.5" stroke="#fff" stroke-width=".5" opacity=".6"/></svg>
<div class="t" style="left:924.06px;top:200px;font-size:8.5px;color:#2a2a2a;transform:scaleX(0.8892);-webkit-text-stroke:0.1px currentColor;">июн 2018</div>
<svg style="left:936.5083333333333px;top:212.5px" width="8" height="7" viewBox="0 0 8 7"><path d="M0 0 H8 L5 3.5 V7 L3 6 V3.5Z" fill="#b4b4bc"/><path d="M0.5 1.2 H7.5" stroke="#fff" stroke-width=".5" opacity=".6"/></svg>
<div class="t" style="left:979.24px;top:200px;font-size:8.5px;color:#2a2a2a;transform:scaleX(0.8892);-webkit-text-stroke:0.1px currentColor;">июл 2018</div>
<svg style="left:991.6916666666667px;top:212.5px" width="8" height="7" viewBox="0 0 8 7"><path d="M0 0 H8 L5 3.5 V7 L3 6 V3.5Z" fill="#b4b4bc"/><path d="M0.5 1.2 H7.5" stroke="#fff" stroke-width=".5" opacity=".6"/></svg>
<div class="t" style="left:1034.42px;top:200px;font-size:8.5px;color:#2a2a2a;transform:scaleX(0.9676);-webkit-text-stroke:0.1px currentColor;">авг 2018</div>
<svg style="left:1046.875px;top:212.5px" width="8" height="7" viewBox="0 0 8 7"><path d="M0 0 H8 L5 3.5 V7 L3 6 V3.5Z" fill="#b4b4bc"/><path d="M0.5 1.2 H7.5" stroke="#fff" stroke-width=".5" opacity=".6"/></svg>
<div class="t" style="left:1089.61px;top:200px;font-size:8.5px;color:#2a2a2a;transform:scaleX(0.9400);-webkit-text-stroke:0.1px currentColor;">сен 2018</div>
<svg style="left:1102.0583333333334px;top:212.5px" width="8" height="7" viewBox="0 0 8 7"><path d="M0 0 H8 L5 3.5 V7 L3 6 V3.5Z" fill="#b4b4bc"/><path d="M0.5 1.2 H7.5" stroke="#fff" stroke-width=".5" opacity=".6"/></svg>
<div class="t" style="left:1144.79px;top:200px;font-size:8.5px;color:#2a2a2a;transform:scaleX(0.9676);-webkit-text-stroke:0.1px currentColor;">окт 2018</div>
<svg style="left:1157.2416666666668px;top:212.5px" width="8" height="7" viewBox="0 0 8 7"><path d="M0 0 H8 L5 3.5 V7 L3 6 V3.5Z" fill="#b4b4bc"/><path d="M0.5 1.2 H7.5" stroke="#fff" stroke-width=".5" opacity=".6"/></svg>
<div class="t" style="left:1199.98px;top:200px;font-size:8.5px;color:#2a2a2a;transform:scaleX(0.9400);-webkit-text-stroke:0.1px currentColor;">ноя 2018</div>
<svg style="left:1212.4250000000002px;top:212.5px" width="8" height="7" viewBox="0 0 8 7"><path d="M0 0 H8 L5 3.5 V7 L3 6 V3.5Z" fill="#b4b4bc"/><path d="M0.5 1.2 H7.5" stroke="#fff" stroke-width=".5" opacity=".6"/></svg>
<div class="t" style="left:1255.16px;top:200px;font-size:8.5px;color:#2a2a2a;transform:scaleX(0.9400);-webkit-text-stroke:0.1px currentColor;">дек 2018</div>
<svg style="left:1267.6083333333333px;top:212.5px" width="8" height="7" viewBox="0 0 8 7"><path d="M0 0 H8 L5 3.5 V7 L3 6 V3.5Z" fill="#b4b4bc"/><path d="M0.5 1.2 H7.5" stroke="#fff" stroke-width=".5" opacity=".6"/></svg>
<div class="r" style="left:259.2px;top:225.3px;width:377.8px;height:248.82px;background:#efefef;"></div>
<div class="r" style="left:360px;top:225.3px;width:171.5px;height:19.14px;background:#f3f3f3;"></div>
<div class="r" style="left:637px;top:225.3px;width:662.2px;height:19.14px;background:#ffffff;"></div>
<div class="r" style="left:259.2px;top:244.44px;width:377.8px;height:19.14px;background:#e3e3e3;"></div>
<div class="r" style="left:360px;top:243.94px;width:277px;height:1px;background:#f8f8f8;"></div>
<div class="r" style="left:637px;top:244.44px;width:662.2px;height:19.14px;background:#e4e4e4;"></div>
<div class="r" style="left:360px;top:263.08000000000004px;width:277px;height:1px;background:#f8f8f8;"></div>
<div class="r" style="left:637px;top:263.58000000000004px;width:662.2px;height:19.14px;background:#ffffff;"></div>
<div class="r" style="left:360px;top:282.22px;width:277px;height:1px;background:#f8f8f8;"></div>
<div class="r" style="left:637px;top:282.72px;width:662.2px;height:19.14px;background:#f0f0f0;"></div>
<div class="r" style="left:360px;top:301.36px;width:277px;height:1px;background:#f8f8f8;"></div>
<div class="r" style="left:637px;top:301.86px;width:662.2px;height:19.14px;background:#ffffff;"></div>
<div class="r" style="left:360px;top:320.5px;width:277px;height:1px;background:#f8f8f8;"></div>
<div class="r" style="left:637px;top:321.0px;width:662.2px;height:19.14px;background:#f0f0f0;"></div>
<div class="r" style="left:360px;top:339.64px;width:277px;height:1px;background:#f8f8f8;"></div>
<div class="r" style="left:637px;top:340.14px;width:662.2px;height:19.14px;background:#ffffff;"></div>
<div class="r" style="left:360px;top:358.78000000000003px;width:277px;height:1px;background:#f8f8f8;"></div>
<div class="r" style="left:360px;top:359.28000000000003px;width:171.5px;height:19.14px;background:#f3f3f3;"></div>
<div class="r" style="left:637px;top:359.28000000000003px;width:662.2px;height:19.14px;background:#f0f0f0;"></div>
<div class="r" style="left:259.2px;top:378.42px;width:377.8px;height:19.14px;background:#e3e3e3;"></div>
<div class="r" style="left:360px;top:377.92px;width:277px;height:1px;background:#f8f8f8;"></div>
<div class="r" style="left:360px;top:378.42px;width:171.5px;height:19.14px;background:#e9e9e9;border:1px solid #dadada;"></div>
<div class="r" style="left:637px;top:378.42px;width:662.2px;height:19.14px;background:#f6f6f6;"></div>
<div class="r" style="left:360px;top:397.06px;width:277px;height:1px;background:#f8f8f8;"></div>
<div class="r" style="left:637px;top:397.56px;width:662.2px;height:19.14px;background:#f0f0f0;"></div>
<div class="r" style="left:360px;top:416.20000000000005px;width:277px;height:1px;background:#f8f8f8;"></div>
<div class="r" style="left:637px;top:416.70000000000005px;width:662.2px;height:19.14px;background:#ffffff;"></div>
<div class="r" style="left:360px;top:435.34000000000003px;width:277px;height:1px;background:#f8f8f8;"></div>
<div class="r" style="left:637px;top:435.84000000000003px;width:662.2px;height:19.14px;background:#f0f0f0;"></div>
<div class="r" style="left:360px;top:454.48px;width:277px;height:1px;background:#f8f8f8;"></div>
<div class="r" style="left:637px;top:454.98px;width:662.2px;height:19.14px;background:#ffffff;"></div>
<div class="r" style="left:259.2px;top:244.44px;width:100.2px;height:19.14px;background:#e3e3e3;"></div>
<div class="r" style="left:259.2px;top:378.42px;width:100.2px;height:19.14px;background:#e3e3e3;"></div>
<div class="r" style="left:259.2px;top:225.2px;width:1040.0px;height:1px;background:#c8c9d6;"></div>
<div class="r" style="left:636.5px;top:192px;width:1px;height:282.2px;background:#9c9c9c;"></div>
<div class="r" style="left:531.5px;top:196px;width:1px;height:25.19999999999999px;background:#f0f1f8;"></div>
<div class="r" style="left:259.2px;top:476px;width:1116.8999999999999px;height:1px;background:#cdcdcd;"></div>
<div class="r" style="left:366.4px;top:231.5px;width:7px;height:7px;border:1px solid #b4b4b4;background:#f8f8f8"></div><div class="r" style="left:367.9px;top:234.5px;width:4px;height:1px;background:#888"></div>
<div class="t" style="left:380.60px;top:231px;font-size:8.5px;color:#222;transform:scaleX(0.9645);-webkit-text-stroke:0.12px currentColor;text-decoration:underline;text-underline-offset:1.2px;text-decoration-color:#444;">Группа компаний "АВС"</div>
<div class="t" style="left:539.40px;top:231px;font-size:8.5px;color:#222;transform:scaleX(0.9542);-webkit-text-stroke:0.12px currentColor;">Тысяча рублей</div>
<svg style="left:619.3px;top:231.5px" width="8" height="7" viewBox="0 0 8 7"><path d="M0 0 H8 L5 3.5 V7 L3 6 V3.5Z" fill="#b0b0b0"/><path d="M0.5 1.2 H7.5" stroke="#fff" stroke-width=".5" opacity=".6"/></svg>
<div class="t" style="left:644.58px;top:231px;font-size:8.5px;color:#222;transform:scaleX(0.9163);-webkit-text-stroke:0.12px currentColor;">350 000,00</div>
<div class="t" style="left:699.77px;top:231px;font-size:8.5px;color:#222;transform:scaleX(0.9163);-webkit-text-stroke:0.12px currentColor;">385 000,00</div>
<div class="t" style="left:754.95px;top:231px;font-size:8.5px;color:#222;transform:scaleX(0.9163);-webkit-text-stroke:0.12px currentColor;">402 500,00</div>
<div class="t" style="left:810.13px;top:231px;font-size:8.5px;color:#222;transform:scaleX(0.9163);-webkit-text-stroke:0.12px currentColor;">420 000,00</div>
<div class="t" style="left:865.32px;top:231px;font-size:8.5px;color:#222;transform:scaleX(0.9163);-webkit-text-stroke:0.12px currentColor;">392 000,00</div>
<div class="t" style="left:920.50px;top:231px;font-size:8.5px;color:#222;transform:scaleX(0.9163);-webkit-text-stroke:0.12px currentColor;">332 500,00</div>
<div class="t" style="left:975.68px;top:231px;font-size:8.5px;color:#222;transform:scaleX(0.9163);-webkit-text-stroke:0.12px currentColor;">315 000,00</div>
<div class="t" style="left:1030.87px;top:231px;font-size:8.5px;color:#222;transform:scaleX(0.9163);-webkit-text-stroke:0.12px currentColor;">280 000,00</div>
<div class="t" style="left:1086.05px;top:231px;font-size:8.5px;color:#222;transform:scaleX(0.9163);-webkit-text-stroke:0.12px currentColor;">339 500,00</div>
<div class="t" style="left:1141.23px;top:231px;font-size:8.5px;color:#222;transform:scaleX(0.9163);-webkit-text-stroke:0.12px currentColor;">367 500,00</div>
<div class="t" style="left:1196.42px;top:231px;font-size:8.5px;color:#222;transform:scaleX(0.9163);-webkit-text-stroke:0.12px currentColor;">392 000,00</div>
<div class="t" style="left:1251.60px;top:231px;font-size:8.5px;color:#222;transform:scaleX(0.9163);-webkit-text-stroke:0.12px currentColor;">437 500,00</div>
<div class="r" style="left:375.3px;top:250.64px;width:7px;height:7px;border:1px solid #b4b4b4;background:#f8f8f8"></div><div class="r" style="left:376.8px;top:253.64px;width:4px;height:1px;background:#888"></div>
<div class="t" style="left:388.50px;top:250px;font-size:8.5px;color:#222;transform:scaleX(0.9454);-webkit-text-stroke:0.12px currentColor;text-decoration:underline;text-underline-offset:1.2px;text-decoration-color:#444;">Холдинг "АВС-Машиностроение"</div>
<div class="t" style="left:539.40px;top:250px;font-size:8.5px;color:#222;transform:scaleX(0.9542);-webkit-text-stroke:0.12px currentColor;">Тысяча рублей</div>
<svg style="left:619.3px;top:250.64px" width="8" height="7" viewBox="0 0 8 7"><path d="M0 0 H8 L5 3.5 V7 L3 6 V3.5Z" fill="#b0b0b0"/><path d="M0.5 1.2 H7.5" stroke="#fff" stroke-width=".5" opacity=".6"/></svg>
<div class="t" style="left:644.58px;top:250px;font-size:8.5px;color:#222;transform:scaleX(0.9163);-webkit-text-stroke:0.12px currentColor;">200 000,00</div>
<div class="t" style="left:699.77px;top:250px;font-size:8.5px;color:#222;transform:scaleX(0.9163);-webkit-text-stroke:0.12px currentColor;">219 999,52</div>
<div class="t" style="left:754.95px;top:250px;font-size:8.5px;color:#222;transform:scaleX(0.9163);-webkit-text-stroke:0.12px currentColor;">229 999,04</div>
<div class="t" style="left:810.13px;top:250px;font-size:8.5px;color:#222;transform:scaleX(0.9163);-webkit-text-stroke:0.12px currentColor;">240 000,00</div>
<div class="t" style="left:865.32px;top:250px;font-size:8.5px;color:#222;transform:scaleX(0.9163);-webkit-text-stroke:0.12px currentColor;">224 000,48</div>
<div class="t" style="left:920.50px;top:250px;font-size:8.5px;color:#222;transform:scaleX(0.9163);-webkit-text-stroke:0.12px currentColor;">190 000,00</div>
<div class="t" style="left:975.68px;top:250px;font-size:8.5px;color:#222;transform:scaleX(0.9163);-webkit-text-stroke:0.12px currentColor;">179 998,09</div>
<div class="t" style="left:1030.87px;top:250px;font-size:8.5px;color:#222;transform:scaleX(0.9163);-webkit-text-stroke:0.12px currentColor;">159 999,52</div>
<div class="t" style="left:1086.05px;top:250px;font-size:8.5px;color:#222;transform:scaleX(0.9163);-webkit-text-stroke:0.12px currentColor;">194 000,48</div>
<div class="t" style="left:1141.23px;top:250px;font-size:8.5px;color:#222;transform:scaleX(0.9163);-webkit-text-stroke:0.12px currentColor;">210 000,48</div>
<div class="t" style="left:1196.42px;top:250px;font-size:8.5px;color:#222;transform:scaleX(0.9163);-webkit-text-stroke:0.12px currentColor;">224 000,48</div>
<div class="t" style="left:1251.60px;top:250px;font-size:8.5px;color:#222;transform:scaleX(0.9163);-webkit-text-stroke:0.12px currentColor;">250 000,48</div>
<div class="t" style="left:396.40px;top:269px;font-size:8.5px;color:#222;transform:scaleX(0.9314);-webkit-text-stroke:0.12px currentColor;">ООО "Машиностроение-1"</div>
<div class="t" style="left:539.40px;top:269px;font-size:8.5px;color:#222;transform:scaleX(0.9542);-webkit-text-stroke:0.12px currentColor;">Тысяча рублей</div>
<svg style="left:619.3px;top:269.78px" width="8" height="7" viewBox="0 0 8 7"><path d="M0 0 H8 L5 3.5 V7 L3 6 V3.5Z" fill="#b0b0b0"/><path d="M0.5 1.2 H7.5" stroke="#fff" stroke-width=".5" opacity=".6"/></svg>
<div class="t" style="left:649.16px;top:269px;font-size:8.5px;color:#222;transform:scaleX(0.9163);-webkit-text-stroke:0.12px currentColor;">90 908,48</div>
<div class="t" style="left:704.35px;top:269px;font-size:8.5px;color:#222;transform:scaleX(0.9163);-webkit-text-stroke:0.12px currentColor;">99 999,17</div>
<div class="t" style="left:754.95px;top:269px;font-size:8.5px;color:#222;transform:scaleX(0.9163);-webkit-text-stroke:0.12px currentColor;">104 545,63</div>
<div class="t" style="left:810.13px;top:269px;font-size:8.5px;color:#222;transform:scaleX(0.9163);-webkit-text-stroke:0.12px currentColor;">109 090,60</div>
<div class="t" style="left:865.32px;top:269px;font-size:8.5px;color:#222;transform:scaleX(0.9163);-webkit-text-stroke:0.12px currentColor;">101 818,70</div>
<div class="t" style="left:925.08px;top:269px;font-size:8.5px;color:#222;transform:scaleX(0.9163);-webkit-text-stroke:0.12px currentColor;">86 363,64</div>
<div class="t" style="left:980.26px;top:269px;font-size:8.5px;color:#222;transform:scaleX(0.9163);-webkit-text-stroke:0.12px currentColor;">81 817,92</div>
<div class="t" style="left:1035.45px;top:269px;font-size:8.5px;color:#222;transform:scaleX(0.9163);-webkit-text-stroke:0.12px currentColor;">72 727,36</div>
<div class="t" style="left:1090.63px;top:269px;font-size:8.5px;color:#222;transform:scaleX(0.9163);-webkit-text-stroke:0.12px currentColor;">88 181,43</div>
<div class="t" style="left:1145.81px;top:269px;font-size:8.5px;color:#222;transform:scaleX(0.9163);-webkit-text-stroke:0.12px currentColor;">95 455,07</div>
<div class="t" style="left:1196.42px;top:269px;font-size:8.5px;color:#222;transform:scaleX(0.9163);-webkit-text-stroke:0.12px currentColor;">101 818,70</div>
<div class="t" style="left:1252.52px;top:269px;font-size:8.5px;color:#222;transform:scaleX(0.9163);-webkit-text-stroke:0.12px currentColor;">113 637,19</div>
<div class="t" style="left:396.40px;top:288px;font-size:8.5px;color:#222;transform:scaleX(0.9314);-webkit-text-stroke:0.12px currentColor;">ООО "Машиностроение-2"</div>
<div class="t" style="left:539.40px;top:288px;font-size:8.5px;color:#222;transform:scaleX(0.9542);-webkit-text-stroke:0.12px currentColor;">Тысяча рублей</div>
<svg style="left:619.3px;top:288.92px" width="8" height="7" viewBox="0 0 8 7"><path d="M0 0 H8 L5 3.5 V7 L3 6 V3.5Z" fill="#b0b0b0"/><path d="M0.5 1.2 H7.5" stroke="#fff" stroke-width=".5" opacity=".6"/></svg>
<div class="t" style="left:644.58px;top:288px;font-size:8.5px;color:#222;transform:scaleX(0.9163);-webkit-text-stroke:0.12px currentColor;">109 091,52</div>
<div class="t" style="left:699.77px;top:288px;font-size:8.5px;color:#222;transform:scaleX(0.9163);-webkit-text-stroke:0.12px currentColor;">120 000,35</div>
<div class="t" style="left:754.95px;top:288px;font-size:8.5px;color:#222;transform:scaleX(0.9163);-webkit-text-stroke:0.12px currentColor;">125 453,42</div>
<div class="t" style="left:810.13px;top:288px;font-size:8.5px;color:#222;transform:scaleX(0.9163);-webkit-text-stroke:0.12px currentColor;">130 909,40</div>
<div class="t" style="left:865.32px;top:288px;font-size:8.5px;color:#222;transform:scaleX(0.9163);-webkit-text-stroke:0.12px currentColor;">122 181,77</div>
<div class="t" style="left:920.50px;top:288px;font-size:8.5px;color:#222;transform:scaleX(0.9163);-webkit-text-stroke:0.12px currentColor;">103 636,36</div>
<div class="t" style="left:980.26px;top:288px;font-size:8.5px;color:#222;transform:scaleX(0.9163);-webkit-text-stroke:0.12px currentColor;">98 180,17</div>
<div class="t" style="left:1035.45px;top:288px;font-size:8.5px;color:#222;transform:scaleX(0.9163);-webkit-text-stroke:0.12px currentColor;">87 272,16</div>
<div class="t" style="left:1086.05px;top:288px;font-size:8.5px;color:#222;transform:scaleX(0.9163);-webkit-text-stroke:0.12px currentColor;">105 819,05</div>
<div class="t" style="left:1142.15px;top:288px;font-size:8.5px;color:#222;transform:scaleX(0.9163);-webkit-text-stroke:0.12px currentColor;">114 545,41</div>
<div class="t" style="left:1196.42px;top:288px;font-size:8.5px;color:#222;transform:scaleX(0.9163);-webkit-text-stroke:0.12px currentColor;">122 181,77</div>
<div class="t" style="left:1251.60px;top:288px;font-size:8.5px;color:#222;transform:scaleX(0.9163);-webkit-text-stroke:0.12px currentColor;">136 363,29</div>
<div class="r" style="left:375.3px;top:308.06px;width:7px;height:7px;border:1px solid #b4b4b4;background:#f8f8f8"></div><div class="r" style="left:376.8px;top:311.06px;width:4px;height:1px;background:#888"></div>
<div class="t" style="left:388.50px;top:308px;font-size:8.5px;color:#222;transform:scaleX(0.9476);-webkit-text-stroke:0.12px currentColor;text-decoration:underline;text-underline-offset:1.2px;text-decoration-color:#444;">Холдинг "АВС-Черная металлургия"</div>
<div class="t" style="left:539.40px;top:308px;font-size:8.5px;color:#222;transform:scaleX(0.9542);-webkit-text-stroke:0.12px currentColor;">Тысяча рублей</div>
<svg style="left:619.3px;top:308.06px" width="8" height="7" viewBox="0 0 8 7"><path d="M0 0 H8 L5 3.5 V7 L3 6 V3.5Z" fill="#b0b0b0"/><path d="M0.5 1.2 H7.5" stroke="#fff" stroke-width=".5" opacity=".6"/></svg>
<div class="t" style="left:644.58px;top:308px;font-size:8.5px;color:#222;transform:scaleX(0.9163);-webkit-text-stroke:0.12px currentColor;">150 000,00</div>
<div class="t" style="left:699.77px;top:308px;font-size:8.5px;color:#222;transform:scaleX(0.9163);-webkit-text-stroke:0.12px currentColor;">165 000,48</div>
<div class="t" style="left:754.95px;top:308px;font-size:8.5px;color:#222;transform:scaleX(0.9163);-webkit-text-stroke:0.12px currentColor;">172 500,96</div>
<div class="t" style="left:810.13px;top:308px;font-size:8.5px;color:#222;transform:scaleX(0.9163);-webkit-text-stroke:0.12px currentColor;">180 000,00</div>
<div class="t" style="left:865.32px;top:308px;font-size:8.5px;color:#222;transform:scaleX(0.9163);-webkit-text-stroke:0.12px currentColor;">167 999,52</div>
<div class="t" style="left:920.50px;top:308px;font-size:8.5px;color:#222;transform:scaleX(0.9163);-webkit-text-stroke:0.12px currentColor;">142 500,00</div>
<div class="t" style="left:975.68px;top:308px;font-size:8.5px;color:#222;transform:scaleX(0.9163);-webkit-text-stroke:0.12px currentColor;">135 001,91</div>
<div class="t" style="left:1030.87px;top:308px;font-size:8.5px;color:#222;transform:scaleX(0.9163);-webkit-text-stroke:0.12px currentColor;">120 000,48</div>
<div class="t" style="left:1086.05px;top:308px;font-size:8.5px;color:#222;transform:scaleX(0.9163);-webkit-text-stroke:0.12px currentColor;">145 499,52</div>
<div class="t" style="left:1141.23px;top:308px;font-size:8.5px;color:#222;transform:scaleX(0.9163);-webkit-text-stroke:0.12px currentColor;">157 499,52</div>
<div class="t" style="left:1196.42px;top:308px;font-size:8.5px;color:#222;transform:scaleX(0.9163);-webkit-text-stroke:0.12px currentColor;">167 999,52</div>
<div class="t" style="left:1251.60px;top:308px;font-size:8.5px;color:#222;transform:scaleX(0.9163);-webkit-text-stroke:0.12px currentColor;">187 499,52</div>
<div class="t" style="left:396.40px;top:327px;font-size:8.5px;color:#222;transform:scaleX(0.9453);-webkit-text-stroke:0.12px currentColor;">ООО "Черная металлургия-1"</div>
<div class="t" style="left:539.40px;top:327px;font-size:8.5px;color:#222;transform:scaleX(0.9542);-webkit-text-stroke:0.12px currentColor;">Тысяча рублей</div>
<svg style="left:619.3px;top:327.2px" width="8" height="7" viewBox="0 0 8 7"><path d="M0 0 H8 L5 3.5 V7 L3 6 V3.5Z" fill="#b0b0b0"/><path d="M0.5 1.2 H7.5" stroke="#fff" stroke-width=".5" opacity=".6"/></svg>
<div class="t" style="left:649.16px;top:327px;font-size:8.5px;color:#222;transform:scaleX(0.9163);-webkit-text-stroke:0.12px currentColor;">68 183,04</div>
<div class="t" style="left:704.35px;top:327px;font-size:8.5px;color:#222;transform:scaleX(0.9163);-webkit-text-stroke:0.12px currentColor;">75 000,22</div>
<div class="t" style="left:759.53px;top:327px;font-size:8.5px;color:#222;transform:scaleX(0.9163);-webkit-text-stroke:0.12px currentColor;">78 409,22</div>
<div class="t" style="left:814.71px;top:327px;font-size:8.5px;color:#222;transform:scaleX(0.9163);-webkit-text-stroke:0.12px currentColor;">81 818,79</div>
<div class="t" style="left:869.90px;top:327px;font-size:8.5px;color:#222;transform:scaleX(0.9163);-webkit-text-stroke:0.12px currentColor;">76 364,03</div>
<div class="t" style="left:925.08px;top:327px;font-size:8.5px;color:#222;transform:scaleX(0.9163);-webkit-text-stroke:0.12px currentColor;">64 772,73</div>
<div class="t" style="left:981.18px;top:327px;font-size:8.5px;color:#222;transform:scaleX(0.9163);-webkit-text-stroke:0.12px currentColor;">61 365,11</div>
<div class="t" style="left:1035.45px;top:327px;font-size:8.5px;color:#222;transform:scaleX(0.9163);-webkit-text-stroke:0.12px currentColor;">54 547,19</div>
<div class="t" style="left:1090.63px;top:327px;font-size:8.5px;color:#222;transform:scaleX(0.9163);-webkit-text-stroke:0.12px currentColor;">66 135,23</div>
<div class="t" style="left:1145.81px;top:327px;font-size:8.5px;color:#222;transform:scaleX(0.9163);-webkit-text-stroke:0.12px currentColor;">71 591,30</div>
<div class="t" style="left:1201.00px;top:327px;font-size:8.5px;color:#222;transform:scaleX(0.9163);-webkit-text-stroke:0.12px currentColor;">76 364,03</div>
<div class="t" style="left:1256.18px;top:327px;font-size:8.5px;color:#222;transform:scaleX(0.9163);-webkit-text-stroke:0.12px currentColor;">85 227,06</div>
<div class="t" style="left:396.40px;top:346px;font-size:8.5px;color:#222;transform:scaleX(0.9453);-webkit-text-stroke:0.12px currentColor;">ООО "Черная металлургия-2"</div>
<div class="t" style="left:539.40px;top:346px;font-size:8.5px;color:#222;transform:scaleX(0.9542);-webkit-text-stroke:0.12px currentColor;">Тысяча рублей</div>
<svg style="left:619.3px;top:346.34000000000003px" width="8" height="7" viewBox="0 0 8 7"><path d="M0 0 H8 L5 3.5 V7 L3 6 V3.5Z" fill="#b0b0b0"/><path d="M0.5 1.2 H7.5" stroke="#fff" stroke-width=".5" opacity=".6"/></svg>
<div class="t" style="left:649.16px;top:346px;font-size:8.5px;color:#222;transform:scaleX(0.9163);-webkit-text-stroke:0.12px currentColor;">81 816,96</div>
<div class="t" style="left:704.35px;top:346px;font-size:8.5px;color:#222;transform:scaleX(0.9163);-webkit-text-stroke:0.12px currentColor;">90 000,26</div>
<div class="t" style="left:759.53px;top:346px;font-size:8.5px;color:#222;transform:scaleX(0.9163);-webkit-text-stroke:0.12px currentColor;">94 091,74</div>
<div class="t" style="left:814.71px;top:346px;font-size:8.5px;color:#222;transform:scaleX(0.9163);-webkit-text-stroke:0.12px currentColor;">98 181,21</div>
<div class="t" style="left:869.90px;top:346px;font-size:8.5px;color:#222;transform:scaleX(0.9163);-webkit-text-stroke:0.12px currentColor;">91 635,49</div>
<div class="t" style="left:925.08px;top:346px;font-size:8.5px;color:#222;transform:scaleX(0.9163);-webkit-text-stroke:0.12px currentColor;">77 727,27</div>
<div class="t" style="left:980.26px;top:346px;font-size:8.5px;color:#222;transform:scaleX(0.9163);-webkit-text-stroke:0.12px currentColor;">73 636,80</div>
<div class="t" style="left:1035.45px;top:346px;font-size:8.5px;color:#222;transform:scaleX(0.9163);-webkit-text-stroke:0.12px currentColor;">65 453,28</div>
<div class="t" style="left:1090.63px;top:346px;font-size:8.5px;color:#222;transform:scaleX(0.9163);-webkit-text-stroke:0.12px currentColor;">79 364,29</div>
<div class="t" style="left:1145.81px;top:346px;font-size:8.5px;color:#222;transform:scaleX(0.9163);-webkit-text-stroke:0.12px currentColor;">85 908,22</div>
<div class="t" style="left:1201.00px;top:346px;font-size:8.5px;color:#222;transform:scaleX(0.9163);-webkit-text-stroke:0.12px currentColor;">91 635,49</div>
<div class="t" style="left:1251.60px;top:346px;font-size:8.5px;color:#222;transform:scaleX(0.9163);-webkit-text-stroke:0.12px currentColor;">102 272,47</div>
<div class="r" style="left:366.4px;top:365.48px;width:7px;height:7px;border:1px solid #b4b4b4;background:#f8f8f8"></div><div class="r" style="left:367.9px;top:368.48px;width:4px;height:1px;background:#888"></div>
<div class="t" style="left:380.60px;top:365px;font-size:8.5px;color:#222;transform:scaleX(0.9645);-webkit-text-stroke:0.12px currentColor;text-decoration:underline;text-underline-offset:1.2px;text-decoration-color:#444;">Группа компаний "АВС"</div>
<div class="t" style="left:539.40px;top:365px;font-size:8.5px;color:#222;transform:scaleX(0.9542);-webkit-text-stroke:0.12px currentColor;">Тысяча рублей</div>
<svg style="left:619.3px;top:365.48px" width="8" height="7" viewBox="0 0 8 7"><path d="M0 0 H8 L5 3.5 V7 L3 6 V3.5Z" fill="#b0b0b0"/><path d="M0.5 1.2 H7.5" stroke="#fff" stroke-width=".5" opacity=".6"/></svg>
<div class="t" style="left:649.16px;top:365px;font-size:8.5px;color:#222;transform:scaleX(0.9163);-webkit-text-stroke:0.12px currentColor;">90 000,00</div>
<div class="t" style="left:704.35px;top:365px;font-size:8.5px;color:#222;transform:scaleX(0.9163);-webkit-text-stroke:0.12px currentColor;">99 000,00</div>
<div class="t" style="left:754.95px;top:365px;font-size:8.5px;color:#222;transform:scaleX(0.9163);-webkit-text-stroke:0.12px currentColor;">103 500,00</div>
<div class="t" style="left:810.13px;top:365px;font-size:8.5px;color:#222;transform:scaleX(0.9163);-webkit-text-stroke:0.12px currentColor;">108 000,00</div>
<div class="t" style="left:865.32px;top:365px;font-size:8.5px;color:#222;transform:scaleX(0.9163);-webkit-text-stroke:0.12px currentColor;">100 800,00</div>
<div class="t" style="left:925.08px;top:365px;font-size:8.5px;color:#222;transform:scaleX(0.9163);-webkit-text-stroke:0.12px currentColor;">85 500,00</div>
<div class="t" style="left:980.26px;top:365px;font-size:8.5px;color:#222;transform:scaleX(0.9163);-webkit-text-stroke:0.12px currentColor;">81 000,00</div>
<div class="t" style="left:1035.45px;top:365px;font-size:8.5px;color:#222;transform:scaleX(0.9163);-webkit-text-stroke:0.12px currentColor;">72 000,00</div>
<div class="t" style="left:1090.63px;top:365px;font-size:8.5px;color:#222;transform:scaleX(0.9163);-webkit-text-stroke:0.12px currentColor;">87 300,00</div>
<div class="t" style="left:1145.81px;top:365px;font-size:8.5px;color:#222;transform:scaleX(0.9163);-webkit-text-stroke:0.12px currentColor;">94 500,00</div>
<div class="t" style="left:1196.42px;top:365px;font-size:8.5px;color:#222;transform:scaleX(0.9163);-webkit-text-stroke:0.12px currentColor;">100 800,00</div>
<div class="t" style="left:1252.52px;top:365px;font-size:8.5px;color:#222;transform:scaleX(0.9163);-webkit-text-stroke:0.12px currentColor;">112 500,00</div>
<div class="r" style="left:375.3px;top:384.62px;width:7px;height:7px;border:1px solid #b4b4b4;background:#f8f8f8"></div><div class="r" style="left:376.8px;top:387.62px;width:4px;height:1px;background:#888"></div>
<div class="t" style="left:388.50px;top:384px;font-size:8.5px;color:#222;transform:scaleX(0.9454);-webkit-text-stroke:0.12px currentColor;text-decoration:underline;text-underline-offset:1.2px;text-decoration-color:#444;">Холдинг "АВС-Машиностроение"</div>
<div class="t" style="left:539.40px;top:384px;font-size:8.5px;color:#222;transform:scaleX(0.9542);-webkit-text-stroke:0.12px currentColor;">Тысяча рублей</div>
<svg style="left:619.3px;top:384.62px" width="8" height="7" viewBox="0 0 8 7"><path d="M0 0 H8 L5 3.5 V7 L3 6 V3.5Z" fill="#b0b0b0"/><path d="M0.5 1.2 H7.5" stroke="#fff" stroke-width=".5" opacity=".6"/></svg>
<div class="t" style="left:649.16px;top:384px;font-size:8.5px;color:#222;transform:scaleX(0.9163);-webkit-text-stroke:0.12px currentColor;">51 269,18</div>
<div class="t" style="left:704.35px;top:384px;font-size:8.5px;color:#222;transform:scaleX(0.9163);-webkit-text-stroke:0.12px currentColor;">56 372,88</div>
<div class="t" style="left:759.53px;top:384px;font-size:8.5px;color:#222;transform:scaleX(0.9163);-webkit-text-stroke:0.12px currentColor;">58 947,22</div>
<div class="t" style="left:814.71px;top:384px;font-size:8.5px;color:#222;transform:scaleX(0.9163);-webkit-text-stroke:0.12px currentColor;">61 514,35</div>
<div class="t" style="left:869.90px;top:384px;font-size:8.5px;color:#222;transform:scaleX(0.9163);-webkit-text-stroke:0.12px currentColor;">57 399,33</div>
<div class="t" style="left:925.08px;top:384px;font-size:8.5px;color:#222;transform:scaleX(0.9163);-webkit-text-stroke:0.12px currentColor;">48 658,17</div>
<div class="t" style="left:980.26px;top:384px;font-size:8.5px;color:#222;transform:scaleX(0.9163);-webkit-text-stroke:0.12px currentColor;">46 079,55</div>
<div class="t" style="left:1035.45px;top:384px;font-size:8.5px;color:#222;transform:scaleX(0.9163);-webkit-text-stroke:0.12px currentColor;">40 942,57</div>
<div class="t" style="left:1090.63px;top:384px;font-size:8.5px;color:#222;transform:scaleX(0.9163);-webkit-text-stroke:0.12px currentColor;">49 684,64</div>
<div class="t" style="left:1145.81px;top:384px;font-size:8.5px;color:#222;transform:scaleX(0.9163);-webkit-text-stroke:0.12px currentColor;">53 799,60</div>
<div class="t" style="left:1201.00px;top:384px;font-size:8.5px;color:#222;transform:scaleX(0.9163);-webkit-text-stroke:0.12px currentColor;">57 399,33</div>
<div class="t" style="left:1256.18px;top:384px;font-size:8.5px;color:#222;transform:scaleX(0.9163);-webkit-text-stroke:0.12px currentColor;">64 084,03</div>
<div class="t" style="left:396.40px;top:403px;font-size:8.5px;color:#222;transform:scaleX(0.9314);-webkit-text-stroke:0.12px currentColor;">ООО "Машиностроение-1"</div>
<div class="t" style="left:539.40px;top:403px;font-size:8.5px;color:#222;transform:scaleX(0.9542);-webkit-text-stroke:0.12px currentColor;">Тысяча рублей</div>
<svg style="left:619.3px;top:403.76px" width="8" height="7" viewBox="0 0 8 7"><path d="M0 0 H8 L5 3.5 V7 L3 6 V3.5Z" fill="#b0b0b0"/><path d="M0.5 1.2 H7.5" stroke="#fff" stroke-width=".5" opacity=".6"/></svg>
<div class="t" style="left:649.16px;top:403px;font-size:8.5px;color:#222;transform:scaleX(0.9163);-webkit-text-stroke:0.12px currentColor;">23 306,96</div>
<div class="t" style="left:704.35px;top:403px;font-size:8.5px;color:#222;transform:scaleX(0.9163);-webkit-text-stroke:0.12px currentColor;">25 624,54</div>
<div class="t" style="left:759.53px;top:403px;font-size:8.5px;color:#222;transform:scaleX(0.9163);-webkit-text-stroke:0.12px currentColor;">26 795,79</div>
<div class="t" style="left:814.71px;top:403px;font-size:8.5px;color:#222;transform:scaleX(0.9163);-webkit-text-stroke:0.12px currentColor;">27 960,37</div>
<div class="t" style="left:869.90px;top:403px;font-size:8.5px;color:#222;transform:scaleX(0.9163);-webkit-text-stroke:0.12px currentColor;">26 093,39</div>
<div class="t" style="left:926.00px;top:403px;font-size:8.5px;color:#222;transform:scaleX(0.9163);-webkit-text-stroke:0.12px currentColor;">22 116,35</div>
<div class="t" style="left:980.26px;top:403px;font-size:8.5px;color:#222;transform:scaleX(0.9163);-webkit-text-stroke:0.12px currentColor;">20 945,95</div>
<div class="t" style="left:1035.45px;top:403px;font-size:8.5px;color:#222;transform:scaleX(0.9163);-webkit-text-stroke:0.12px currentColor;">18 609,76</div>
<div class="t" style="left:1090.63px;top:403px;font-size:8.5px;color:#222;transform:scaleX(0.9163);-webkit-text-stroke:0.12px currentColor;">22 586,32</div>
<div class="t" style="left:1145.81px;top:403px;font-size:8.5px;color:#222;transform:scaleX(0.9163);-webkit-text-stroke:0.12px currentColor;">24 456,56</div>
<div class="t" style="left:1201.00px;top:403px;font-size:8.5px;color:#222;transform:scaleX(0.9163);-webkit-text-stroke:0.12px currentColor;">26 093,39</div>
<div class="t" style="left:1256.18px;top:403px;font-size:8.5px;color:#222;transform:scaleX(0.9163);-webkit-text-stroke:0.12px currentColor;">29 127,61</div>
<div class="t" style="left:396.40px;top:422px;font-size:8.5px;color:#222;transform:scaleX(0.9314);-webkit-text-stroke:0.12px currentColor;">ООО "Машиностроение-2"</div>
<div class="t" style="left:539.40px;top:422px;font-size:8.5px;color:#222;transform:scaleX(0.9542);-webkit-text-stroke:0.12px currentColor;">Тысяча рублей</div>
<svg style="left:619.3px;top:422.9px" width="8" height="7" viewBox="0 0 8 7"><path d="M0 0 H8 L5 3.5 V7 L3 6 V3.5Z" fill="#b0b0b0"/><path d="M0.5 1.2 H7.5" stroke="#fff" stroke-width=".5" opacity=".6"/></svg>
<div class="t" style="left:649.16px;top:422px;font-size:8.5px;color:#222;transform:scaleX(0.9163);-webkit-text-stroke:0.12px currentColor;">27 962,22</div>
<div class="t" style="left:704.35px;top:422px;font-size:8.5px;color:#222;transform:scaleX(0.9163);-webkit-text-stroke:0.12px currentColor;">30 748,35</div>
<div class="t" style="left:759.53px;top:422px;font-size:8.5px;color:#222;transform:scaleX(0.9163);-webkit-text-stroke:0.12px currentColor;">32 151,44</div>
<div class="t" style="left:814.71px;top:422px;font-size:8.5px;color:#222;transform:scaleX(0.9163);-webkit-text-stroke:0.12px currentColor;">33 553,98</div>
<div class="t" style="left:869.90px;top:422px;font-size:8.5px;color:#222;transform:scaleX(0.9163);-webkit-text-stroke:0.12px currentColor;">31 305,93</div>
<div class="t" style="left:925.08px;top:422px;font-size:8.5px;color:#222;transform:scaleX(0.9163);-webkit-text-stroke:0.12px currentColor;">26 541,81</div>
<div class="t" style="left:980.26px;top:422px;font-size:8.5px;color:#222;transform:scaleX(0.9163);-webkit-text-stroke:0.12px currentColor;">25 133,60</div>
<div class="t" style="left:1035.45px;top:422px;font-size:8.5px;color:#222;transform:scaleX(0.9163);-webkit-text-stroke:0.12px currentColor;">22 332,81</div>
<div class="t" style="left:1090.63px;top:422px;font-size:8.5px;color:#222;transform:scaleX(0.9163);-webkit-text-stroke:0.12px currentColor;">27 098,32</div>
<div class="t" style="left:1145.81px;top:422px;font-size:8.5px;color:#222;transform:scaleX(0.9163);-webkit-text-stroke:0.12px currentColor;">29 343,05</div>
<div class="t" style="left:1201.00px;top:422px;font-size:8.5px;color:#222;transform:scaleX(0.9163);-webkit-text-stroke:0.12px currentColor;">31 305,93</div>
<div class="t" style="left:1256.18px;top:422px;font-size:8.5px;color:#222;transform:scaleX(0.9163);-webkit-text-stroke:0.12px currentColor;">34 956,42</div>
<div class="r" style="left:375.3px;top:442.04px;width:7px;height:7px;border:1px solid #b4b4b4;background:#f8f8f8"></div><div class="r" style="left:376.8px;top:445.04px;width:4px;height:1px;background:#888"></div>
<div class="t" style="left:388.50px;top:442px;font-size:8.5px;color:#222;transform:scaleX(0.9476);-webkit-text-stroke:0.12px currentColor;text-decoration:underline;text-underline-offset:1.2px;text-decoration-color:#444;">Холдинг "АВС-Черная металлургия"</div>
<div class="t" style="left:539.40px;top:442px;font-size:8.5px;color:#222;transform:scaleX(0.9542);-webkit-text-stroke:0.12px currentColor;">Тысяча рублей</div>
<svg style="left:619.3px;top:442.04px" width="8" height="7" viewBox="0 0 8 7"><path d="M0 0 H8 L5 3.5 V7 L3 6 V3.5Z" fill="#b0b0b0"/><path d="M0.5 1.2 H7.5" stroke="#fff" stroke-width=".5" opacity=".6"/></svg>
<div class="t" style="left:649.16px;top:442px;font-size:8.5px;color:#222;transform:scaleX(0.9163);-webkit-text-stroke:0.12px currentColor;">38 730,82</div>
<div class="t" style="left:704.35px;top:442px;font-size:8.5px;color:#222;transform:scaleX(0.9163);-webkit-text-stroke:0.12px currentColor;">42 627,12</div>
<div class="t" style="left:759.53px;top:442px;font-size:8.5px;color:#222;transform:scaleX(0.9163);-webkit-text-stroke:0.12px currentColor;">44 552,78</div>
<div class="t" style="left:814.71px;top:442px;font-size:8.5px;color:#222;transform:scaleX(0.9163);-webkit-text-stroke:0.12px currentColor;">46 485,65</div>
<div class="t" style="left:869.90px;top:442px;font-size:8.5px;color:#222;transform:scaleX(0.9163);-webkit-text-stroke:0.12px currentColor;">43 400,67</div>
<div class="t" style="left:925.08px;top:442px;font-size:8.5px;color:#222;transform:scaleX(0.9163);-webkit-text-stroke:0.12px currentColor;">36 841,83</div>
<div class="t" style="left:980.26px;top:442px;font-size:8.5px;color:#222;transform:scaleX(0.9163);-webkit-text-stroke:0.12px currentColor;">34 920,45</div>
<div class="t" style="left:1035.45px;top:442px;font-size:8.5px;color:#222;transform:scaleX(0.9163);-webkit-text-stroke:0.12px currentColor;">31 057,43</div>
<div class="t" style="left:1090.63px;top:442px;font-size:8.5px;color:#222;transform:scaleX(0.9163);-webkit-text-stroke:0.12px currentColor;">37 615,36</div>
<div class="t" style="left:1145.81px;top:442px;font-size:8.5px;color:#222;transform:scaleX(0.9163);-webkit-text-stroke:0.12px currentColor;">40 700,40</div>
<div class="t" style="left:1201.00px;top:442px;font-size:8.5px;color:#222;transform:scaleX(0.9163);-webkit-text-stroke:0.12px currentColor;">43 400,67</div>
<div class="t" style="left:1256.18px;top:442px;font-size:8.5px;color:#222;transform:scaleX(0.9163);-webkit-text-stroke:0.12px currentColor;">48 415,97</div>
<div class="t" style="left:396.40px;top:461px;font-size:8.5px;color:#222;transform:scaleX(0.9453);-webkit-text-stroke:0.12px currentColor;">ООО "Черная металлургия-1"</div>
<div class="t" style="left:539.40px;top:461px;font-size:8.5px;color:#222;transform:scaleX(0.9542);-webkit-text-stroke:0.12px currentColor;">Тысяча рублей</div>
<svg style="left:619.3px;top:461.18px" width="8" height="7" viewBox="0 0 8 7"><path d="M0 0 H8 L5 3.5 V7 L3 6 V3.5Z" fill="#b0b0b0"/><path d="M0.5 1.2 H7.5" stroke="#fff" stroke-width=".5" opacity=".6"/></svg>
<div class="t" style="left:649.16px;top:461px;font-size:8.5px;color:#222;transform:scaleX(0.9163);-webkit-text-stroke:0.12px currentColor;">17 602,71</div>
<div class="t" style="left:704.35px;top:461px;font-size:8.5px;color:#222;transform:scaleX(0.9163);-webkit-text-stroke:0.12px currentColor;">19 372,45</div>
<div class="t" style="left:759.53px;top:461px;font-size:8.5px;color:#222;transform:scaleX(0.9163);-webkit-text-stroke:0.12px currentColor;">20 246,84</div>
<div class="t" style="left:814.71px;top:461px;font-size:8.5px;color:#222;transform:scaleX(0.9163);-webkit-text-stroke:0.12px currentColor;">21 132,55</div>
<div class="t" style="left:869.90px;top:461px;font-size:8.5px;color:#222;transform:scaleX(0.9163);-webkit-text-stroke:0.12px currentColor;">19 722,36</div>
<div class="t" style="left:925.08px;top:461px;font-size:8.5px;color:#222;transform:scaleX(0.9163);-webkit-text-stroke:0.12px currentColor;">16 743,87</div>
<div class="t" style="left:980.26px;top:461px;font-size:8.5px;color:#222;transform:scaleX(0.9163);-webkit-text-stroke:0.12px currentColor;">15 874,54</div>
<div class="t" style="left:1036.36px;top:461px;font-size:8.5px;color:#222;transform:scaleX(0.9163);-webkit-text-stroke:0.12px currentColor;">14 113,49</div>
<div class="t" style="left:1090.63px;top:461px;font-size:8.5px;color:#222;transform:scaleX(0.9163);-webkit-text-stroke:0.12px currentColor;">17 093,06</div>
<div class="t" style="left:1145.81px;top:461px;font-size:8.5px;color:#222;transform:scaleX(0.9163);-webkit-text-stroke:0.12px currentColor;">18 497,06</div>
<div class="t" style="left:1201.00px;top:461px;font-size:8.5px;color:#222;transform:scaleX(0.9163);-webkit-text-stroke:0.12px currentColor;">19 722,36</div>
<div class="t" style="left:1256.18px;top:461px;font-size:8.5px;color:#222;transform:scaleX(0.9163);-webkit-text-stroke:0.12px currentColor;">22 007,86</div>
<div class="r" style="left:265.3px;top:289.0px;width:7px;height:7px;border:1px solid #b4b4b4;background:#f8f8f8"></div><div class="r" style="left:266.8px;top:292.0px;width:4px;height:1px;background:#888"></div>
<div class="t" style="left:279.00px;top:288px;font-size:8.5px;color:#222;transform:scaleX(0.9500);-webkit-text-stroke:0.12px currentColor;">Выручка</div>
<div class="r" style="left:265.3px;top:422.5px;width:7px;height:7px;border:1px solid #b4b4b4;background:#f8f8f8"></div><div class="r" style="left:266.8px;top:425.5px;width:4px;height:1px;background:#888"></div>
<div class="t" style="left:279.00px;top:422px;font-size:8.5px;color:#222;transform:scaleX(0.9380);-webkit-text-stroke:0.12px currentColor;">Прибыль от продаж</div>
<div class="r" style="left:1293.5px;top:237.5px;width:10px;height:10px;border-radius:50%;border:1px solid #c8c8c8;background:#fafafa"></div>
<svg style="left:1297.5px;top:240.5px" width="3" height="4"><path d="M0 0 L3 2 L0 4Z" fill="#555"/></svg>
<div class="r" style="left:1364.6px;top:192px;width:11.5px;height:282px;background:#fff;"></div>
<div class="r" style="left:1364.6px;top:192px;width:11.5px;height:11px;border:1px solid #e8e8e8;border-radius:2px;background:#f6f6f6;"></div>
<svg style="left:1368.5px;top:196.5px" width="4" height="2"><path d="M0 2 L2 0 L4 2Z" fill="#777"/></svg>
<div class="r" style="left:1364.6px;top:204px;width:11.5px;height:238.5px;border:1px solid #e6e6e6;border-radius:2px;background:#fff;"></div>
<div class="r" style="left:1367.5px;top:443px;width:5.5px;height:19px;border-left:1px solid #e4e4e4;border-right:1px solid #e4e4e4;"></div>
<div class="r" style="left:1364.6px;top:463px;width:11.5px;height:11px;border:1px solid #e8e8e8;border-radius:2px;background:#fafafa;"></div>
<svg style="left:1368.5px;top:467.5px" width="4" height="2"><path d="M0 0 H4 L2 2Z" fill="#444"/></svg>
<div class="r" style="left:1377.2px;top:192px;width:12px;height:543px;border:1px solid #ececec;border-radius:2px;background:#fff;"></div>
<div class="r" style="left:1377.2px;top:192px;width:12px;height:11px;border:1px solid #e6e6e6;border-radius:2px;background:#f6f6f6;"></div>
<svg style="left:1381.5px;top:196.5px" width="4" height="2"><path d="M0 2 L2 0 L4 2Z" fill="#777"/></svg>
<div class="r" style="left:1377.2px;top:204px;width:12px;height:485px;border:1px solid #e6e6e6;border-radius:2px;background:#fff;"></div>
<div class="r" style="left:1380px;top:690px;width:6px;height:28px;border-left:1px solid #e4e4e4;border-right:1px solid #e4e4e4;"></div>
<div class="r" style="left:1377.2px;top:719px;width:12px;height:15px;border:1px solid #e6e6e6;border-radius:2px;background:#fafafa;"></div>
<svg style="left:1381.5px;top:725px" width="4" height="2"><path d="M0 0 H4 L2 2Z" fill="#444"/></svg>
<div class="r" style="left:311.6px;top:489px;width:1058.8000000000002px;height:230.39999999999998px;background:linear-gradient(#dadada 0%,#e6e6e6 35%,#f3f3f3 70%,#fdfdfd 100%);"></div>
<div class="r" style="left:311.6px;top:680.4px;width:1058.8000000000002px;height:1.2px;background:rgba(255,255,255,0.45);"></div>
<div class="r" style="left:311.6px;top:642.0px;width:1058.8000000000002px;height:1.2px;background:rgba(255,255,255,0.55);"></div>
<div class="r" style="left:311.6px;top:603.6px;width:1058.8000000000002px;height:1.2px;background:rgba(255,255,255,0.65);"></div>
<div class="r" style="left:311.6px;top:565.1999999999999px;width:1058.8000000000002px;height:1.2px;background:rgba(255,255,255,0.75);"></div>
<div class="r" style="left:311.6px;top:526.8px;width:1058.8000000000002px;height:1.2px;background:rgba(255,255,255,0.85);"></div>
<div class="r" style="left:311.6px;top:719.4px;width:1058.8000000000002px;height:1px;background:#e2e2e2;"></div>
<div class="r" style="left:355.1166666666667px;top:489px;width:1.2px;height:230.39999999999998px;background:rgba(255,255,255,.75);"></div>
<div class="r" style="left:443.35px;top:489px;width:1.2px;height:230.39999999999998px;background:rgba(255,255,255,.75);"></div>
<div class="r" style="left:531.5833333333334px;top:489px;width:1.2px;height:230.39999999999998px;background:rgba(255,255,255,.75);"></div>
<div class="r" style="left:619.8166666666667px;top:489px;width:1.2px;height:230.39999999999998px;background:rgba(255,255,255,.75);"></div>
<div class="r" style="left:708.0500000000001px;top:489px;width:1.2px;height:230.39999999999998px;background:rgba(255,255,255,.75);"></div>
<div class="r" style="left:796.2833333333334px;top:489px;width:1.2px;height:230.39999999999998px;background:rgba(255,255,255,.75);"></div>
<div class="r" style="left:884.5166666666668px;top:489px;width:1.2px;height:230.39999999999998px;background:rgba(255,255,255,.75);"></div>
<div class="r" style="left:972.7500000000001px;top:489px;width:1.2px;height:230.39999999999998px;background:rgba(255,255,255,.75);"></div>
<div class="r" style="left:1060.9833333333336px;top:489px;width:1.2px;height:230.39999999999998px;background:rgba(255,255,255,.75);"></div>
<div class="r" style="left:1149.216666666667px;top:489px;width:1.2px;height:230.39999999999998px;background:rgba(255,255,255,.75);"></div>
<div class="r" style="left:1237.4500000000003px;top:489px;width:1.2px;height:230.39999999999998px;background:rgba(255,255,255,.75);"></div>
<div class="r" style="left:1325.6833333333336px;top:489px;width:1.2px;height:230.39999999999998px;background:rgba(255,255,255,.75);"></div>
<div class="r" style="left:337.1166666666667px;top:565.8px;width:37.2px;height:153.60000000000002px;background:#80b8b3;border:1px solid #5f9ea2;border-bottom:none;"></div>
<div class="t" style="left:339.47px;top:726px;font-size:9px;color:#8a8a8a;transform:scaleX(0.8784);">янв 2018</div>
<div class="r" style="left:425.35px;top:550.44036864px;width:37.2px;height:168.95963136px;background:#80b8b3;border:1px solid #5f9ea2;border-bottom:none;"></div>
<div class="t" style="left:427.70px;top:726px;font-size:9px;color:#8a8a8a;transform:scaleX(0.8125);">фев 2018</div>
<div class="r" style="left:513.5833333333334px;top:542.7607372800001px;width:37.2px;height:176.63926271999992px;background:#80b8b3;border:1px solid #5f9ea2;border-bottom:none;"></div>
<div class="t" style="left:515.93px;top:726px;font-size:9px;color:#8a8a8a;transform:scaleX(0.8333);">мар 2018</div>
<div class="r" style="left:601.8166666666667px;top:535.08px;width:37.2px;height:184.31999999999994px;background:#80b8b3;border:1px solid #5f9ea2;border-bottom:none;"></div>
<div class="t" style="left:604.17px;top:726px;font-size:9px;color:#8a8a8a;transform:scaleX(0.8553);">апр 2018</div>
<div class="r" style="left:690.0500000000001px;top:547.36763136px;width:37.2px;height:172.03236863999996px;background:#80b8b3;border:1px solid #5f9ea2;border-bottom:none;"></div>
<div class="t" style="left:692.40px;top:726px;font-size:9px;color:#8a8a8a;transform:scaleX(0.8333);">май 2018</div>
<div class="r" style="left:778.2833333333334px;top:573.48px;width:37.2px;height:145.91999999999996px;background:#80b8b3;border:1px solid #5f9ea2;border-bottom:none;"></div>
<div class="t" style="left:780.63px;top:726px;font-size:9px;color:#8a8a8a;transform:scaleX(0.8333);">июн 2018</div>
<div class="r" style="left:866.5166666666668px;top:581.16146688px;width:37.2px;height:138.23853311999994px;background:#80b8b3;border:1px solid #5f9ea2;border-bottom:none;"></div>
<div class="t" style="left:868.87px;top:726px;font-size:9px;color:#8a8a8a;transform:scaleX(0.8333);">июл 2018</div>
<div class="r" style="left:954.7500000000001px;top:596.52036864px;width:37.2px;height:122.87963135999996px;background:#80b8b3;border:1px solid #5f9ea2;border-bottom:none;"></div>
<div class="t" style="left:957.10px;top:726px;font-size:9px;color:#8a8a8a;transform:scaleX(0.9028);">авг 2018</div>
<div class="r" style="left:1042.9833333333336px;top:570.40763136px;width:37.2px;height:148.99236864px;background:#80b8b3;border:1px solid #5f9ea2;border-bottom:none;"></div>
<div class="t" style="left:1045.33px;top:726px;font-size:9px;color:#8a8a8a;transform:scaleX(0.8784);">сен 2018</div>
<div class="r" style="left:1131.216666666667px;top:558.11963136px;width:37.2px;height:161.28036864px;background:#80b8b3;border:1px solid #5f9ea2;border-bottom:none;"></div>
<div class="t" style="left:1133.57px;top:726px;font-size:9px;color:#8a8a8a;transform:scaleX(0.9028);">окт 2018</div>
<div class="r" style="left:1219.4500000000003px;top:547.36763136px;width:37.2px;height:172.03236863999996px;background:#80b8b3;border:1px solid #5f9ea2;border-bottom:none;"></div>
<div class="t" style="left:1221.80px;top:726px;font-size:9px;color:#8a8a8a;transform:scaleX(0.8784);">ноя 2018</div>
<div class="r" style="left:1307.6833333333336px;top:527.3996313600001px;width:37.2px;height:192.00036863999992px;background:#80b8b3;border:1px solid #5f9ea2;border-bottom:none;"></div>
<div class="t" style="left:1310.03px;top:726px;font-size:9px;color:#8a8a8a;transform:scaleX(0.8784);">дек 2018</div>
<svg style="left:0;top:0" width="1411" height="764"><polyline points="355.7,680.0 444.0,676.1 532.2,674.1 620.4,672.2 708.7,675.3 796.9,682.0 885.1,684.0 973.4,688.0 1061.6,681.2 1149.8,678.1 1238.1,675.3 1326.3,670.2" fill="none" stroke="#a3c43a" stroke-width="1.6"/><circle cx="355.7" cy="680.0" r="2.4" fill="#f4f8d4" stroke="#c8dc78" stroke-width=".6"/><circle cx="444.0" cy="676.1" r="2.4" fill="#f4f8d4" stroke="#c8dc78" stroke-width=".6"/><circle cx="532.2" cy="674.1" r="2.4" fill="#f4f8d4" stroke="#c8dc78" stroke-width=".6"/><circle cx="620.4" cy="672.2" r="2.4" fill="#f4f8d4" stroke="#c8dc78" stroke-width=".6"/><circle cx="708.7" cy="675.3" r="2.4" fill="#f4f8d4" stroke="#c8dc78" stroke-width=".6"/><circle cx="796.9" cy="682.0" r="2.4" fill="#f4f8d4" stroke="#c8dc78" stroke-width=".6"/><circle cx="885.1" cy="684.0" r="2.4" fill="#f4f8d4" stroke="#c8dc78" stroke-width=".6"/><circle cx="973.4" cy="688.0" r="2.4" fill="#f4f8d4" stroke="#c8dc78" stroke-width=".6"/><circle cx="1061.6" cy="681.2" r="2.4" fill="#f4f8d4" stroke="#c8dc78" stroke-width=".6"/><circle cx="1149.8" cy="678.1" r="2.4" fill="#f4f8d4" stroke="#c8dc78" stroke-width=".6"/><circle cx="1238.1" cy="675.3" r="2.4" fill="#f4f8d4" stroke="#c8dc78" stroke-width=".6"/><circle cx="1326.3" cy="670.2" r="2.4" fill="#f4f8d4" stroke="#c8dc78" stroke-width=".6"/></svg>
<div class="t" style="left:289.10px;top:715px;font-size:9px;color:#808080;transform:scaleX(0.8778);">0,00</div>
<div class="t" style="left:269.79px;top:677px;font-size:9px;color:#808080;transform:scaleX(0.8778);">50 000,00</div>
<div class="t" style="left:265.40px;top:639px;font-size:9px;color:#808080;transform:scaleX(0.8778);">100 000,00</div>
<div class="t" style="left:265.40px;top:600px;font-size:9px;color:#808080;transform:scaleX(0.8778);">150 000,00</div>
<div class="t" style="left:265.40px;top:562px;font-size:9px;color:#808080;transform:scaleX(0.8778);">200 000,00</div>
<div class="t" style="left:265.40px;top:523px;font-size:9px;color:#808080;transform:scaleX(0.8778);">250 000,00</div>
<div class="t" style="left:265.40px;top:485px;font-size:9px;color:#808080;transform:scaleX(0.8778);">300 000,00</div>
<div class="t" style="left:1119.50px;top:754px;font-size:8.2px;color:#fff;transform:scaleX(0.9826);">Среднее: 132006,2249</div>
<div class="t" style="left:1226.00px;top:754px;font-size:8.2px;color:#fff;transform:scaleX(0.9679);">Сумма: 3168149,397</div>
<div class="t" style="left:1318.00px;top:753px;font-size:8px;color:#8cc4ea;transform:scaleX(0.9688);">CAP</div>
<div class="r" style="left:1342px;top:749px;width:1px;height:15px;background:rgba(255,255,255,.45);"></div>
<div class="t" style="left:1349.00px;top:753px;font-size:8px;color:#fff;font-weight:bold;transform:scaleX(1.0833);">NUM</div>
<div class="r" style="left:1376px;top:749px;width:1px;height:15px;background:rgba(255,255,255,.45);"></div>
<div class="t" style="left:1383.00px;top:753px;font-size:8px;color:#8cc4ea;transform:scaleX(1.0238);">SCRL</div>
</body></html>
